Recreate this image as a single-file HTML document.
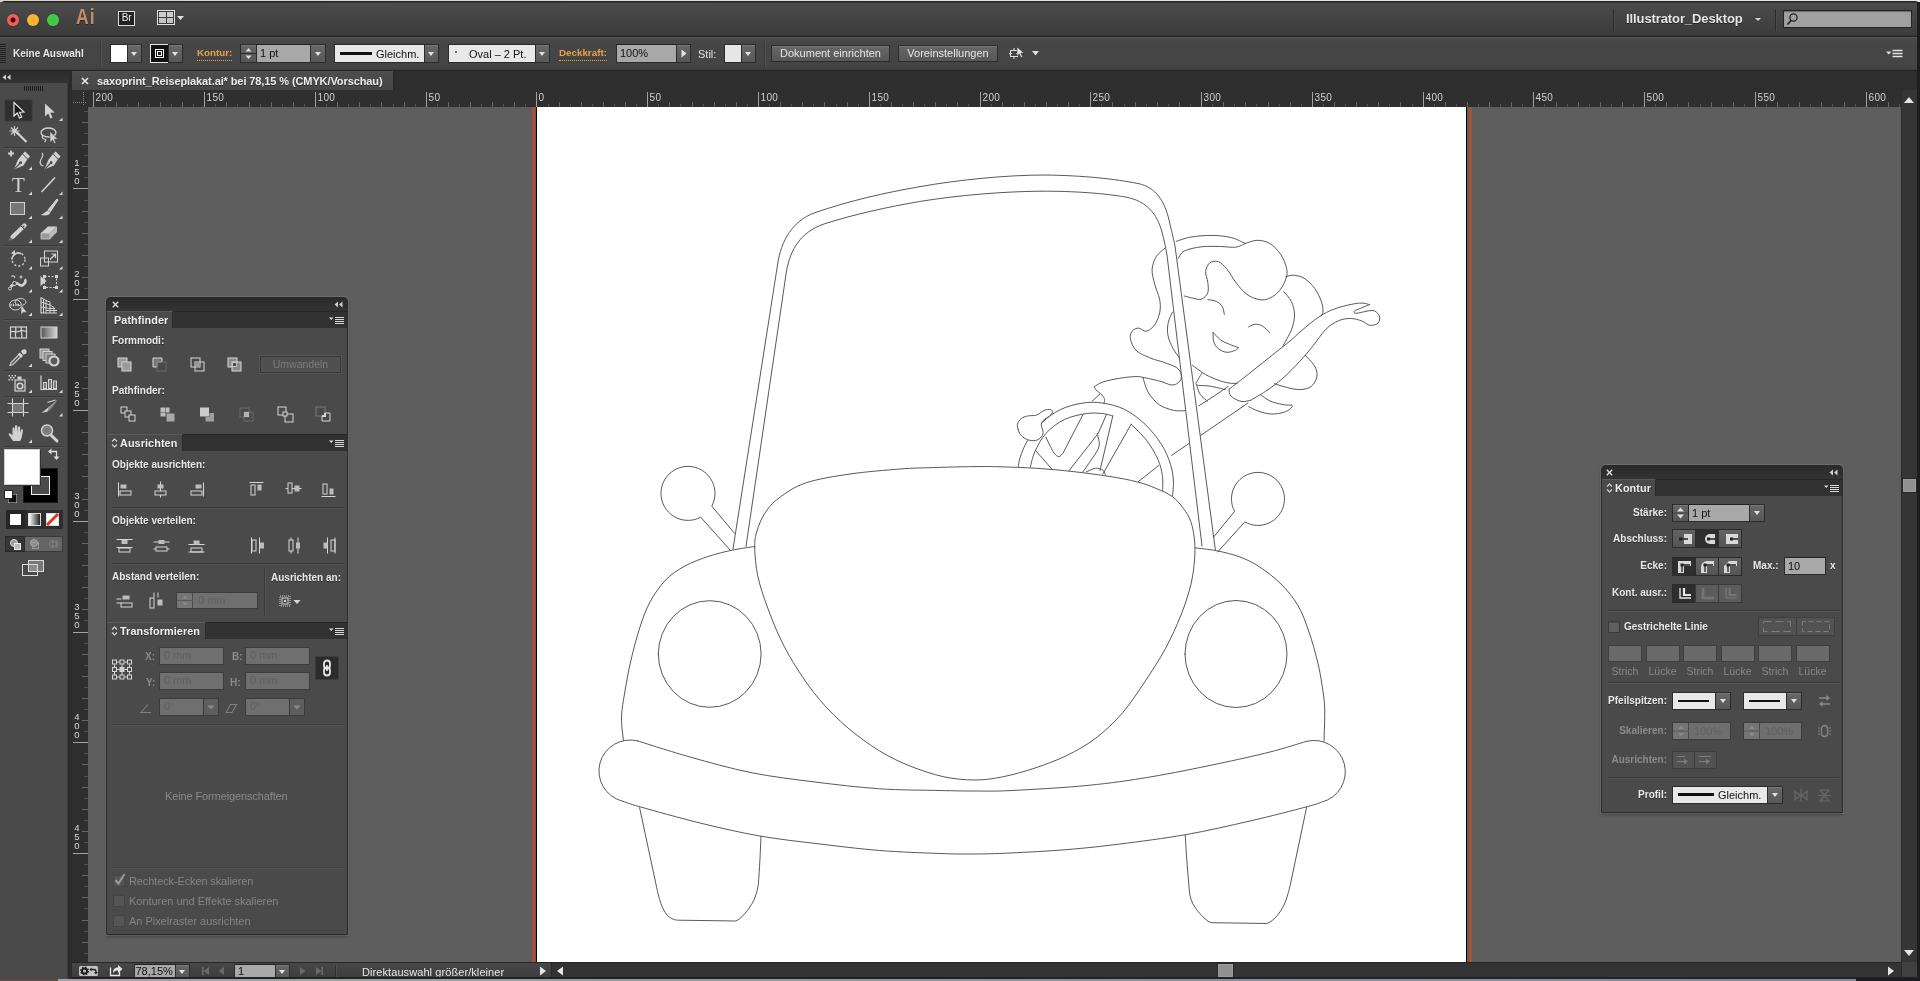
<!DOCTYPE html>
<html lang="de">
<head>
<meta charset="utf-8">
<title>saxoprint_Reiseplakat.ai* bei 78,15 % (CMYK/Vorschau)</title>
<style>
*{box-sizing:border-box;margin:0;padding:0}
html,body{width:1920px;height:981px;overflow:hidden;background:#5e5e5e}
body{position:relative;font-family:"Liberation Sans",sans-serif;font-size:11px;color:#e4e4e4;-webkit-font-smoothing:antialiased}
.a{position:absolute}
.t{position:absolute;white-space:nowrap;line-height:12px;height:12px}
.b{font-weight:bold}
.lbl{position:absolute;white-space:nowrap;line-height:12px;height:12px;font-weight:bold;font-size:10px;color:#e9e9e9;text-shadow:0 1px 0 rgba(0,0,0,.35)}
.dim{color:#8b8b8b;text-shadow:none}
.or{color:#eda049;font-weight:bold;font-size:9.8px}
.inp{position:absolute;background:#a8a8a8;border:1px solid #2b2b2b;border-top-color:#222;color:#111;font-size:11px;line-height:15px;padding-left:3px;white-space:nowrap;overflow:hidden}
.inpd{position:absolute;background:#6f6f6f;border:1px solid #3c3c3c;color:#606060;font-size:11px;line-height:15px;padding-left:4px;white-space:nowrap;overflow:hidden}
.btn{position:absolute;background:linear-gradient(#666,#575757);border:1px solid #2b2b2b;box-shadow:inset 0 1px 0 rgba(255,255,255,.12)}
.dd{position:absolute;background:linear-gradient(#686868,#585858);border:1px solid #2b2b2b;box-shadow:inset 0 1px 0 rgba(255,255,255,.12)}
.dd:after{content:"";position:absolute;left:50%;top:50%;margin:-2px 0 0 -3.5px;border:3.5px solid transparent;border-top:4.5px solid #e2e2e2;border-bottom:0}
.lt{position:absolute;background:#e8e8e8;border:1px solid #2b2b2b;color:#111}
.sep{position:absolute;background:#3a3a3a;box-shadow:0 1px 0 #555}
.vsep{position:absolute;background:#3a3a3a;box-shadow:1px 0 0 #555;width:1px}
svg{position:absolute;overflow:visible}
.ic{fill:none;stroke:#dcdcdc;stroke-width:1}
</style>
</head>
<body>
<div id="root" style="position:absolute;left:0;top:0;width:1920px;height:981px;will-change:transform">
<!-- ===== window top edge ===== -->
<div class="a" style="left:0;top:0;width:1920px;height:2px;background:linear-gradient(90deg,#d9cfc6,#e4e0e4 50%,#e8e6f0)"></div>
<div class="a" style="left:0;top:1px;width:1920px;height:36px;background:linear-gradient(#242424 0,#242424 1px,#4b4b4b 2px,#464646 12px,#3c3c3c 34px,#262626 35px);border-radius:5px 5px 0 0"></div>
<div class="a" style="left:1917px;top:2px;width:3px;height:979px;background:#1d1d1d"></div>
<!-- traffic lights -->
<div class="a" style="left:7px;top:14px;width:12px;height:12px;border-radius:50%;background:radial-gradient(circle,#3a0a08 0,#3a0a08 2px,#f25a52 3px,#f0665e 6px);box-shadow:0 0 1px #2a2a2a"></div>
<div class="a" style="left:27px;top:14px;width:12px;height:12px;border-radius:50%;background:radial-gradient(circle,#f3a92a 0,#f6bb33 6px);box-shadow:0 0 1px #2a2a2a"></div>
<div class="a" style="left:47px;top:14px;width:12px;height:12px;border-radius:50%;background:radial-gradient(circle,#3fc144 0,#44cf48 6px);box-shadow:0 0 1px #2a2a2a"></div>
<div class="t b" style="left:76px;top:5px;font-size:22px;line-height:24px;height:24px;color:#c48d69;letter-spacing:1.2px;transform:scaleX(.8);transform-origin:0 0;text-shadow:0 1px 0 #2a2a2a">Ai</div>
<!-- Br -->
<div class="a" style="left:118px;top:11px;width:17px;height:15px;border:1px solid #dcdcdc;background:#222;color:#ececec;font-size:10px;line-height:12px;text-align:center;letter-spacing:-.3px">Br</div>
<!-- arrange docs -->
<svg style="left:157px;top:10px" width="30" height="16"><rect x=".5" y=".5" width="17" height="14" fill="#3a3a3a" stroke="#e0e0e0"/><rect x="2" y="2" width="7" height="5" fill="#cdcdcd"/><rect x="2" y="8" width="7" height="5" fill="#c4c4c4"/><rect x="10" y="2" width="6" height="5" fill="#cdcdcd"/><rect x="10" y="8" width="6" height="5" fill="#c4c4c4"/><path d="M20 6h7l-3.5 4z" fill="#e0e0e0"/></svg>
<!-- right side of title bar -->
<div class="a" style="left:1613px;top:9px;width:1px;height:22px;background:#2a2a2a;box-shadow:1px 0 0 #4c4c4c"></div>
<div class="t b" style="left:1626px;top:12px;font-size:13px;line-height:14px;height:14px;color:#e6e6e6;letter-spacing:-.1px;text-shadow:0 1px 0 #222">Illustrator_Desktop</div>
<svg style="left:1754px;top:17px" width="8" height="5"><path d="M1 1h6l-3 3z" fill="#d8d8d8"/></svg>
<div class="a" style="left:1775px;top:9px;width:1px;height:22px;background:#2a2a2a;box-shadow:1px 0 0 #4c4c4c"></div>
<div class="a" style="left:1783px;top:10px;width:129px;height:18px;background:#a0a0a0;border:1px solid #242424;box-shadow:inset 0 1px 1px rgba(0,0,0,.35)"></div>
<svg style="left:1786px;top:12px" width="14" height="14"><circle cx="7.5" cy="5.5" r="3.6" fill="none" stroke="#222" stroke-width="1.3"/><path d="M5 8.5L1.5 12.5" stroke="#222" stroke-width="1.6"/></svg>

<!-- ===== control bar ===== -->
<div class="a" style="left:0;top:37px;width:1917px;height:33px;background:linear-gradient(#4b4b4b,#464646 4px,#444 30px,#3a3a3a);border-top:1px solid #555"></div>
<div class="a" style="left:0;top:70px;width:1917px;height:1px;background:#262626"></div>
<!-- grip -->
<div class="a" style="left:0;top:44px;width:6px;height:19px;background:repeating-linear-gradient(#1e1e1e 0,#1e1e1e 1px,#4a4a4a 1px,#4a4a4a 2px)"></div>
<div class="t b" style="left:13px;top:48px;font-size:10px;color:#e9e9e9;text-shadow:0 1px 0 #2a2a2a">Keine Auswahl</div>
<div class="a" style="left:100px;top:41px;width:1px;height:26px;background:#3a3a3a;box-shadow:1px 0 0 #515151"></div>
<!-- fill swatch -->
<div class="a" style="left:110px;top:44px;width:18px;height:19px;background:#fff;border:1px solid #2b2b2b"></div>
<div class="dd" style="left:127px;top:44px;width:15px;height:19px"></div>
<!-- stroke swatch -->
<div class="a" style="left:150px;top:44px;width:19px;height:19px;background:#111;border:1px solid #e8e8e8"></div>
<div class="a" style="left:155px;top:49px;width:9px;height:9px;background:#111;border:1px solid #f2f2f2"></div><div class="a" style="left:157px;top:51px;width:5px;height:5px;background:#222;border:1px solid #f2f2f2"></div>
<div class="dd" style="left:168px;top:44px;width:15px;height:19px"></div>
<div class="t or" style="left:197px;top:47px;border-bottom:1px dotted #eda049;height:14px">Kontur:</div>
<!-- stepper + input -->
<div class="btn" style="left:240px;top:44px;width:17px;height:19px"></div>
<svg style="left:240px;top:44px" width="17" height="19"><path d="M1 9.500h15" stroke="#2e2e2e"/><path d="M5.500 7.500h6L8.500 4zM5.500 11.500h6l-3 3.500z" fill="#dedede"/></svg>
<div class="inp" style="left:256px;top:44px;width:55px;height:19px;line-height:17px">1 pt</div>
<div class="dd" style="left:310px;top:44px;width:16px;height:19px"></div>
<!-- profile dropdown -->
<div class="lt" style="left:334px;top:44px;width:91px;height:19px"></div>
<div class="a" style="left:340px;top:52px;width:32px;height:3px;background:#111"></div>
<div class="t" style="left:376px;top:48px;color:#111">Gleichm.</div>
<div class="dd" style="left:424px;top:44px;width:15px;height:19px"></div>
<!-- brush dropdown -->
<div class="lt" style="left:448px;top:44px;width:88px;height:19px"></div>
<div class="a" style="left:455px;top:51px;width:2px;height:2px;background:#333;border-radius:1px"></div>
<div class="t" style="left:469px;top:48px;color:#111">Oval – 2 Pt.</div>
<div class="dd" style="left:535px;top:44px;width:15px;height:19px"></div>
<div class="t or" style="left:559px;top:47px;border-bottom:1px dotted #eda049;height:14px">Deckkraft:</div>
<div class="inp" style="left:616px;top:44px;width:61px;height:19px;line-height:17px">100%</div>
<div class="btn" style="left:676px;top:44px;width:15px;height:19px"></div>
<svg style="left:676px;top:44px" width="15" height="19"><path d="M5.5 5.5v8l5-4z" fill="#e4e4e4"/></svg>
<div class="t" style="left:698px;top:48px;color:#e2e2e2">Stil:</div>
<div class="a" style="left:724px;top:44px;width:18px;height:19px;background:#e6e6e6;border:1px solid #2b2b2b"></div>
<div class="dd" style="left:741px;top:44px;width:15px;height:19px"></div>
<div class="a" style="left:764px;top:41px;width:1px;height:26px;background:#3a3a3a;box-shadow:1px 0 0 #515151"></div>
<div class="btn" style="left:771px;top:45px;width:119px;height:17px;text-align:center;line-height:15px;color:#e6e6e6">Dokument einrichten</div>
<div class="btn" style="left:898px;top:45px;width:100px;height:17px;text-align:center;line-height:15px;color:#e6e6e6">Voreinstellungen</div>
<svg style="left:1009px;top:46px" width="32" height="16"><rect x="1.5" y="4.5" width="7" height="6" fill="none" stroke="#ddd"/><path d="M0 7.5h3M7 7.5h4M5 2v3M5 10v3" stroke="#ddd"/><path d="M8 1l7 6-3.2.2 1.8 3.6-1.6.8-1.8-3.7L8 10z" fill="#e6e6e6" stroke="#333" stroke-width=".5"/><path d="M23 5h7l-3.5 4.5z" fill="#e0e0e0"/></svg>
<!-- control-bar menu icon -->
<svg style="left:1886px;top:49px" width="17" height="9"><path d="M0 2.500h5.500L2.750 5.500z" fill="#e0e0e0"/><path d="M6.500 1.500h10M6.500 4.500h10M6.500 7.500h10" stroke="#e4e4e4" stroke-width="1.500"/></svg>

<!-- ===== tab bar ===== -->
<div class="a" style="left:72px;top:71px;width:1845px;height:19px;background:#2e2e2e"></div>
<div class="a" style="left:72px;top:71px;width:322px;height:19px;background:linear-gradient(#4d4d4d,#474747);border-right:1px solid #262626"></div>
<svg style="left:81px;top:77px" width="8" height="8"><path d="M1 1l6 6M7 1l-6 6" stroke="#e8e8e8" stroke-width="1.6"/></svg>
<div class="t b" style="left:97px;top:75px;font-size:11px;letter-spacing:-.1px;color:#ededed;text-shadow:0 1px 0 #2a2a2a">saxoprint_Reiseplakat.ai* bei 78,15 % (CMYK/Vorschau)</div>
<!-- ===== canvas ===== -->
<div class="a" style="left:88px;top:107px;width:1813px;height:855px;background:#5e5e5e"></div>
<div class="a" style="left:532px;top:107px;width:3px;height:855px;background:#a8502f"></div>
<div class="a" style="left:536px;top:107px;width:931px;height:855px;background:#fff;border-left:1px solid #000;border-right:1px solid #000"></div>
<div class="a" style="left:1469px;top:107px;width:3px;height:855px;background:#a8502f"></div>
<!-- horizontal ruler -->
<div class="a" style="left:72px;top:90px;width:1829px;height:17px;background:#2f2f2f"></div>
<svg style="left:0;top:90px" width="1901" height="17" shape-rendering="crispEdges"><path d="M93.5 2V17" stroke="#a2a2a2"/><path d="M105.5 14V17" stroke="#505050"/><path d="M116.5 12V17" stroke="#666"/><path d="M127.5 14V17" stroke="#505050"/><path d="M138.5 12V17" stroke="#666"/><path d="M149.5 14V17" stroke="#505050"/><path d="M160.5 12V17" stroke="#666"/><path d="M171.5 14V17" stroke="#505050"/><path d="M182.5 12V17" stroke="#666"/><path d="M193.5 14V17" stroke="#505050"/><path d="M204.5 2V17" stroke="#a2a2a2"/><path d="M215.5 14V17" stroke="#505050"/><path d="M226.5 12V17" stroke="#666"/><path d="M237.5 14V17" stroke="#505050"/><path d="M249.5 12V17" stroke="#666"/><path d="M260.5 14V17" stroke="#505050"/><path d="M271.5 12V17" stroke="#666"/><path d="M282.5 14V17" stroke="#505050"/><path d="M293.5 12V17" stroke="#666"/><path d="M304.5 14V17" stroke="#505050"/><path d="M315.5 2V17" stroke="#a2a2a2"/><path d="M326.5 14V17" stroke="#505050"/><path d="M337.5 12V17" stroke="#666"/><path d="M348.5 14V17" stroke="#505050"/><path d="M359.5 12V17" stroke="#666"/><path d="M370.5 14V17" stroke="#505050"/><path d="M381.5 12V17" stroke="#666"/><path d="M393.5 14V17" stroke="#505050"/><path d="M404.5 12V17" stroke="#666"/><path d="M415.5 14V17" stroke="#505050"/><path d="M426.5 2V17" stroke="#a2a2a2"/><path d="M437.5 14V17" stroke="#505050"/><path d="M448.5 12V17" stroke="#666"/><path d="M459.5 14V17" stroke="#505050"/><path d="M470.5 12V17" stroke="#666"/><path d="M481.5 14V17" stroke="#505050"/><path d="M492.5 12V17" stroke="#666"/><path d="M503.5 14V17" stroke="#505050"/><path d="M514.5 12V17" stroke="#666"/><path d="M525.5 14V17" stroke="#505050"/><path d="M536.5 2V17" stroke="#a2a2a2"/><path d="M548.5 14V17" stroke="#505050"/><path d="M559.5 12V17" stroke="#666"/><path d="M570.5 14V17" stroke="#505050"/><path d="M581.5 12V17" stroke="#666"/><path d="M592.5 14V17" stroke="#505050"/><path d="M603.5 12V17" stroke="#666"/><path d="M614.5 14V17" stroke="#505050"/><path d="M625.5 12V17" stroke="#666"/><path d="M636.5 14V17" stroke="#505050"/><path d="M647.5 2V17" stroke="#a2a2a2"/><path d="M658.5 14V17" stroke="#505050"/><path d="M669.5 12V17" stroke="#666"/><path d="M680.5 14V17" stroke="#505050"/><path d="M692.5 12V17" stroke="#666"/><path d="M703.5 14V17" stroke="#505050"/><path d="M714.5 12V17" stroke="#666"/><path d="M725.5 14V17" stroke="#505050"/><path d="M736.5 12V17" stroke="#666"/><path d="M747.5 14V17" stroke="#505050"/><path d="M758.5 2V17" stroke="#a2a2a2"/><path d="M769.5 14V17" stroke="#505050"/><path d="M780.5 12V17" stroke="#666"/><path d="M791.5 14V17" stroke="#505050"/><path d="M802.5 12V17" stroke="#666"/><path d="M813.5 14V17" stroke="#505050"/><path d="M824.5 12V17" stroke="#666"/><path d="M836.5 14V17" stroke="#505050"/><path d="M847.5 12V17" stroke="#666"/><path d="M858.5 14V17" stroke="#505050"/><path d="M869.5 2V17" stroke="#a2a2a2"/><path d="M880.5 14V17" stroke="#505050"/><path d="M891.5 12V17" stroke="#666"/><path d="M902.5 14V17" stroke="#505050"/><path d="M913.5 12V17" stroke="#666"/><path d="M924.5 14V17" stroke="#505050"/><path d="M935.5 12V17" stroke="#666"/><path d="M946.5 14V17" stroke="#505050"/><path d="M957.5 12V17" stroke="#666"/><path d="M968.5 14V17" stroke="#505050"/><path d="M980.5 2V17" stroke="#a2a2a2"/><path d="M991.5 14V17" stroke="#505050"/><path d="M1002.5 12V17" stroke="#666"/><path d="M1013.5 14V17" stroke="#505050"/><path d="M1024.5 12V17" stroke="#666"/><path d="M1035.5 14V17" stroke="#505050"/><path d="M1046.5 12V17" stroke="#666"/><path d="M1057.5 14V17" stroke="#505050"/><path d="M1068.5 12V17" stroke="#666"/><path d="M1079.5 14V17" stroke="#505050"/><path d="M1090.5 2V17" stroke="#a2a2a2"/><path d="M1101.5 14V17" stroke="#505050"/><path d="M1112.5 12V17" stroke="#666"/><path d="M1124.5 14V17" stroke="#505050"/><path d="M1135.5 12V17" stroke="#666"/><path d="M1146.5 14V17" stroke="#505050"/><path d="M1157.5 12V17" stroke="#666"/><path d="M1168.5 14V17" stroke="#505050"/><path d="M1179.5 12V17" stroke="#666"/><path d="M1190.5 14V17" stroke="#505050"/><path d="M1201.5 2V17" stroke="#a2a2a2"/><path d="M1212.5 14V17" stroke="#505050"/><path d="M1223.5 12V17" stroke="#666"/><path d="M1234.5 14V17" stroke="#505050"/><path d="M1245.5 12V17" stroke="#666"/><path d="M1256.5 14V17" stroke="#505050"/><path d="M1268.5 12V17" stroke="#666"/><path d="M1279.5 14V17" stroke="#505050"/><path d="M1290.5 12V17" stroke="#666"/><path d="M1301.5 14V17" stroke="#505050"/><path d="M1312.5 2V17" stroke="#a2a2a2"/><path d="M1323.5 14V17" stroke="#505050"/><path d="M1334.5 12V17" stroke="#666"/><path d="M1345.5 14V17" stroke="#505050"/><path d="M1356.5 12V17" stroke="#666"/><path d="M1367.5 14V17" stroke="#505050"/><path d="M1378.5 12V17" stroke="#666"/><path d="M1389.5 14V17" stroke="#505050"/><path d="M1400.5 12V17" stroke="#666"/><path d="M1412.5 14V17" stroke="#505050"/><path d="M1423.5 2V17" stroke="#a2a2a2"/><path d="M1434.5 14V17" stroke="#505050"/><path d="M1445.5 12V17" stroke="#666"/><path d="M1456.5 14V17" stroke="#505050"/><path d="M1467.5 12V17" stroke="#666"/><path d="M1478.5 14V17" stroke="#505050"/><path d="M1489.5 12V17" stroke="#666"/><path d="M1500.5 14V17" stroke="#505050"/><path d="M1511.5 12V17" stroke="#666"/><path d="M1522.5 14V17" stroke="#505050"/><path d="M1533.5 2V17" stroke="#a2a2a2"/><path d="M1544.5 14V17" stroke="#505050"/><path d="M1556.5 12V17" stroke="#666"/><path d="M1567.5 14V17" stroke="#505050"/><path d="M1578.5 12V17" stroke="#666"/><path d="M1589.5 14V17" stroke="#505050"/><path d="M1600.5 12V17" stroke="#666"/><path d="M1611.5 14V17" stroke="#505050"/><path d="M1622.5 12V17" stroke="#666"/><path d="M1633.5 14V17" stroke="#505050"/><path d="M1644.5 2V17" stroke="#a2a2a2"/><path d="M1655.5 14V17" stroke="#505050"/><path d="M1666.5 12V17" stroke="#666"/><path d="M1677.5 14V17" stroke="#505050"/><path d="M1688.5 12V17" stroke="#666"/><path d="M1700.5 14V17" stroke="#505050"/><path d="M1711.5 12V17" stroke="#666"/><path d="M1722.5 14V17" stroke="#505050"/><path d="M1733.5 12V17" stroke="#666"/><path d="M1744.5 14V17" stroke="#505050"/><path d="M1755.5 2V17" stroke="#a2a2a2"/><path d="M1766.5 14V17" stroke="#505050"/><path d="M1777.5 12V17" stroke="#666"/><path d="M1788.5 14V17" stroke="#505050"/><path d="M1799.5 12V17" stroke="#666"/><path d="M1810.5 14V17" stroke="#505050"/><path d="M1821.5 12V17" stroke="#666"/><path d="M1832.5 14V17" stroke="#505050"/><path d="M1844.5 12V17" stroke="#666"/><path d="M1855.5 14V17" stroke="#505050"/><path d="M1866.5 2V17" stroke="#a2a2a2"/><path d="M1877.5 14V17" stroke="#505050"/><path d="M1888.5 12V17" stroke="#666"/><path d="M1899.5 14V17" stroke="#505050"/></svg>
<div class="t" style="left:95.5px;top:93px;font-size:10px;line-height:10px;height:10px;color:#cfcfcf;letter-spacing:.35px">200</div>
<div class="t" style="left:206.5px;top:93px;font-size:10px;line-height:10px;height:10px;color:#cfcfcf;letter-spacing:.35px">150</div>
<div class="t" style="left:317.5px;top:93px;font-size:10px;line-height:10px;height:10px;color:#cfcfcf;letter-spacing:.35px">100</div>
<div class="t" style="left:428.5px;top:93px;font-size:10px;line-height:10px;height:10px;color:#cfcfcf;letter-spacing:.35px">50</div>
<div class="t" style="left:538.5px;top:93px;font-size:10px;line-height:10px;height:10px;color:#cfcfcf;letter-spacing:.35px">0</div>
<div class="t" style="left:649.5px;top:93px;font-size:10px;line-height:10px;height:10px;color:#cfcfcf;letter-spacing:.35px">50</div>
<div class="t" style="left:760.5px;top:93px;font-size:10px;line-height:10px;height:10px;color:#cfcfcf;letter-spacing:.35px">100</div>
<div class="t" style="left:871.5px;top:93px;font-size:10px;line-height:10px;height:10px;color:#cfcfcf;letter-spacing:.35px">150</div>
<div class="t" style="left:982.5px;top:93px;font-size:10px;line-height:10px;height:10px;color:#cfcfcf;letter-spacing:.35px">200</div>
<div class="t" style="left:1092.5px;top:93px;font-size:10px;line-height:10px;height:10px;color:#cfcfcf;letter-spacing:.35px">250</div>
<div class="t" style="left:1203.5px;top:93px;font-size:10px;line-height:10px;height:10px;color:#cfcfcf;letter-spacing:.35px">300</div>
<div class="t" style="left:1314.5px;top:93px;font-size:10px;line-height:10px;height:10px;color:#cfcfcf;letter-spacing:.35px">350</div>
<div class="t" style="left:1425.5px;top:93px;font-size:10px;line-height:10px;height:10px;color:#cfcfcf;letter-spacing:.35px">400</div>
<div class="t" style="left:1535.5px;top:93px;font-size:10px;line-height:10px;height:10px;color:#cfcfcf;letter-spacing:.35px">450</div>
<div class="t" style="left:1646.5px;top:93px;font-size:10px;line-height:10px;height:10px;color:#cfcfcf;letter-spacing:.35px">500</div>
<div class="t" style="left:1757.5px;top:93px;font-size:10px;line-height:10px;height:10px;color:#cfcfcf;letter-spacing:.35px">550</div>
<div class="t" style="left:1868.5px;top:93px;font-size:10px;line-height:10px;height:10px;color:#cfcfcf;letter-spacing:.35px">600</div>
<div class="a" style="left:72px;top:90px;width:16px;height:17px;background:#2f2f2f"></div>
<svg style="left:72px;top:90px" width="16" height="17" shape-rendering="crispEdges"><path d="M11.5 2v14M1 12.5h14" stroke="#888" stroke-dasharray="1 1"/></svg>
<!-- vertical ruler -->
<div class="a" style="left:72px;top:107px;width:16px;height:855px;background:#2f2f2f"></div>
<svg style="left:72px;top:0" width="16" height="962" shape-rendering="crispEdges"><path d="M12 111.5H16" stroke="#505050"/><path d="M10 122.5H16" stroke="#666"/><path d="M12 133.5H16" stroke="#505050"/><path d="M10 144.5H16" stroke="#666"/><path d="M12 155.5H16" stroke="#505050"/><path d="M10 166.5H16" stroke="#666"/><path d="M12 177.5H16" stroke="#505050"/><path d="M1 188.5H16" stroke="#a2a2a2"/><path d="M12 200.5H16" stroke="#505050"/><path d="M10 211.5H16" stroke="#666"/><path d="M12 222.5H16" stroke="#505050"/><path d="M10 233.5H16" stroke="#666"/><path d="M12 244.5H16" stroke="#505050"/><path d="M10 255.5H16" stroke="#666"/><path d="M12 266.5H16" stroke="#505050"/><path d="M10 277.5H16" stroke="#666"/><path d="M12 288.5H16" stroke="#505050"/><path d="M1 299.5H16" stroke="#a2a2a2"/><path d="M12 310.5H16" stroke="#505050"/><path d="M10 321.5H16" stroke="#666"/><path d="M12 332.5H16" stroke="#505050"/><path d="M10 344.5H16" stroke="#666"/><path d="M12 355.5H16" stroke="#505050"/><path d="M10 366.5H16" stroke="#666"/><path d="M12 377.5H16" stroke="#505050"/><path d="M10 388.5H16" stroke="#666"/><path d="M12 399.5H16" stroke="#505050"/><path d="M1 410.5H16" stroke="#a2a2a2"/><path d="M12 421.5H16" stroke="#505050"/><path d="M10 432.5H16" stroke="#666"/><path d="M12 443.5H16" stroke="#505050"/><path d="M10 454.5H16" stroke="#666"/><path d="M12 465.5H16" stroke="#505050"/><path d="M10 476.5H16" stroke="#666"/><path d="M12 488.5H16" stroke="#505050"/><path d="M10 499.5H16" stroke="#666"/><path d="M12 510.5H16" stroke="#505050"/><path d="M1 521.5H16" stroke="#a2a2a2"/><path d="M12 532.5H16" stroke="#505050"/><path d="M10 543.5H16" stroke="#666"/><path d="M12 554.5H16" stroke="#505050"/><path d="M10 565.5H16" stroke="#666"/><path d="M12 576.5H16" stroke="#505050"/><path d="M10 587.5H16" stroke="#666"/><path d="M12 598.5H16" stroke="#505050"/><path d="M10 609.5H16" stroke="#666"/><path d="M12 620.5H16" stroke="#505050"/><path d="M1 632.5H16" stroke="#a2a2a2"/><path d="M12 643.5H16" stroke="#505050"/><path d="M10 654.5H16" stroke="#666"/><path d="M12 665.5H16" stroke="#505050"/><path d="M10 676.5H16" stroke="#666"/><path d="M12 687.5H16" stroke="#505050"/><path d="M10 698.5H16" stroke="#666"/><path d="M12 709.5H16" stroke="#505050"/><path d="M10 720.5H16" stroke="#666"/><path d="M12 731.5H16" stroke="#505050"/><path d="M1 742.5H16" stroke="#a2a2a2"/><path d="M12 753.5H16" stroke="#505050"/><path d="M10 764.5H16" stroke="#666"/><path d="M12 776.5H16" stroke="#505050"/><path d="M10 787.5H16" stroke="#666"/><path d="M12 798.5H16" stroke="#505050"/><path d="M10 809.5H16" stroke="#666"/><path d="M12 820.5H16" stroke="#505050"/><path d="M10 831.5H16" stroke="#666"/><path d="M12 842.5H16" stroke="#505050"/><path d="M1 853.5H16" stroke="#a2a2a2"/><path d="M12 864.5H16" stroke="#505050"/><path d="M10 875.5H16" stroke="#666"/><path d="M12 886.5H16" stroke="#505050"/><path d="M10 897.5H16" stroke="#666"/><path d="M12 908.5H16" stroke="#505050"/><path d="M10 920.5H16" stroke="#666"/><path d="M12 931.5H16" stroke="#505050"/><path d="M10 942.5H16" stroke="#666"/><path d="M12 953.5H16" stroke="#505050"/></svg>
<div class="t" style="left:73.5px;top:158px;width:7px;font-size:9.5px;line-height:9px;height:28px;color:#d6d6d6;text-align:center;white-space:normal;word-break:break-all">1<br>5<br>0</div>
<div class="t" style="left:73.5px;top:269px;width:7px;font-size:9.5px;line-height:9px;height:28px;color:#d6d6d6;text-align:center;white-space:normal;word-break:break-all">2<br>0<br>0</div>
<div class="t" style="left:73.5px;top:380px;width:7px;font-size:9.5px;line-height:9px;height:28px;color:#d6d6d6;text-align:center;white-space:normal;word-break:break-all">2<br>5<br>0</div>
<div class="t" style="left:73.5px;top:491px;width:7px;font-size:9.5px;line-height:9px;height:28px;color:#d6d6d6;text-align:center;white-space:normal;word-break:break-all">3<br>0<br>0</div>
<div class="t" style="left:73.5px;top:602px;width:7px;font-size:9.5px;line-height:9px;height:28px;color:#d6d6d6;text-align:center;white-space:normal;word-break:break-all">3<br>5<br>0</div>
<div class="t" style="left:73.5px;top:712px;width:7px;font-size:9.5px;line-height:9px;height:28px;color:#d6d6d6;text-align:center;white-space:normal;word-break:break-all">4<br>0<br>0</div>
<div class="t" style="left:73.5px;top:823px;width:7px;font-size:9.5px;line-height:9px;height:28px;color:#d6d6d6;text-align:center;white-space:normal;word-break:break-all">4<br>5<br>0</div>
<!-- scrollbars -->
<div class="a" style="left:1901px;top:90px;width:16px;height:872px;background:#353535;border-left:1px solid #2a2a2a"></div>
<svg style="left:1903px;top:96px" width="12" height="8"><path d="M1 7h10l-5-6z" fill="#e3e3e3"/></svg>
<svg style="left:1903px;top:949px" width="12" height="8"><path d="M1 1h10l-5 6z" fill="#e3e3e3"/></svg>
<div class="a" style="left:1902px;top:478px;width:15px;height:15px;background:#909090;border:1px solid #262626;box-shadow:inset 0 0 0 1px #9d9d9d"></div>
<!-- status bar -->
<div class="a" style="left:72px;top:962px;width:1845px;height:17px;background:#333;border-top:1px solid #262626"></div>
<div class="a" style="left:72px;top:962px;width:480px;height:17px;background:linear-gradient(#474747,#3c3c3c);border-top:1px solid #262626"></div>
<div class="a" style="left:1901px;top:962px;width:16px;height:17px;background:#404040;border-left:1px solid #2a2a2a"></div>
<svg style="left:79px;top:966px" width="20" height="11"><rect x="0" y="0" width="19" height="10" rx="1.500" fill="#c4c4c4"/><circle cx="5.500" cy="5" r="2.500" fill="#c4c4c4" stroke="#1e1e1e" stroke-width="2"/><circle cx="5.500" cy="5" r="3.800" fill="none" stroke="#1e1e1e" stroke-width="1.400" stroke-dasharray="1.500 1.480"/><path d="M11.500 3.500h3.500a2 2 0 0 1 2 2v1" fill="none" stroke="#1e1e1e" stroke-width="1.400"/><path d="M12.500 1.500L10.500 3.500l2 2zM15 6h4l-2 2.500z" fill="#1e1e1e"/></svg>
<svg style="left:109px;top:964px" width="14" height="13"><path d="M1.5 3.5v8h9v-4" fill="none" stroke="#e6e6e6" stroke-width="1.3"/><path d="M4 9c0-4 2-5.5 5-5.5V1l4.5 4L9 9V6.5c-2 0-3.6.4-5 2.5z" fill="#e6e6e6"/></svg>
<div class="inp" style="left:134px;top:964px;width:42px;height:15px;line-height:13px;padding-left:.5px;background:#a9a9a9;font-size:11px">78,15%</div>
<div class="dd" style="left:175px;top:964px;width:15px;height:15px"></div>
<svg style="left:199px;top:965px" width="130" height="12"><g fill="#6a6a6a"><path d="M3 2h1.6v8H3zM10 2v8L4.6 6z"/><path d="M25 2v8l-5.4-4z"/></g><g fill="#6a6a6a"><path d="M101 2v8l5.400-4z"/><path d="M117 2v8l5.4-4zM122.400 2h1.600v8h-1.600z"/></g></svg>
<div class="inp" style="left:234px;top:964px;width:42px;height:15px;line-height:13px;padding-left:3px;background:#a9a9a9;font-size:11px">1</div>
<div class="dd" style="left:275px;top:964px;width:15px;height:15px"></div>
<div class="a" style="left:335px;top:965px;width:1px;height:12px;background:#2f2f2f;box-shadow:1px 0 0 #505050"></div>
<div class="t" style="left:362px;top:966px;font-size:11px;color:#e8e8e8;letter-spacing:.08px">Direktauswahl größer/kleiner</div>
<svg style="left:538px;top:965px" width="10" height="12"><path d="M2 1.500v9l6-4.500z" fill="#e6e6e6"/></svg>
<div class="a" style="left:551px;top:963px;width:1px;height:16px;background:#262626"></div>
<svg style="left:555px;top:965px" width="10" height="12"><path d="M8 1.500v9l-6-4.500z" fill="#e6e6e6"/></svg>
<svg style="left:1886px;top:965px" width="10" height="12"><path d="M2 1.500v9l6-4.500z" fill="#e6e6e6"/></svg>
<div class="a" style="left:1217px;top:963px;width:17px;height:15px;background:#909090;border:1px solid #262626;box-shadow:inset 0 0 0 1px #9d9d9d"></div>
<div class="a" style="left:0;top:977px;width:1920px;height:2px;background:#222"></div>
<div class="a" style="left:0;top:979px;width:1920px;height:2px;background:linear-gradient(90deg,#a6a2a6 0,#a0a0a8 15%,#8c8ea0 60%,#85879a 100%)"></div>
<div class="a" style="left:0;top:978px;width:58px;height:3px;background:linear-gradient(#4a3c34,#6a5548)"></div>
<div class="a" style="left:1856px;top:978px;width:64px;height:3px;background:#1c1c20"></div>
<!-- ===== artwork ===== -->
<svg style="left:0;top:0" width="1920" height="981" viewBox="0 0 1920 981"><g fill="none" stroke="#4f4f4f" stroke-width=".95" stroke-linejoin="round" stroke-linecap="round">
<path d="M1176.1 241.4C1178.5 240.7 1184.7 238.1 1190.6 237.1C1196.6 236.1 1205.3 235.3 1212.1 235.4C1218.8 235.5 1225.8 236.2 1231.3 237.6C1236.9 238.9 1242.9 242.6 1245.2 243.5"/>
<path d="M1245.2 243.5C1247.2 243.0 1252.9 240.3 1257.0 240.3C1261.1 240.3 1265.9 241.2 1269.9 243.5C1273.8 245.9 1277.8 250.2 1280.6 254.3C1283.3 258.4 1285.7 264.1 1286.6 268.2C1287.5 272.3 1287.1 275.1 1285.9 278.9C1284.7 282.6 1282.2 287.4 1279.5 290.6C1276.8 293.9 1273.3 296.6 1269.9 298.1C1266.5 299.6 1263.1 300.4 1259.2 299.6C1255.2 298.9 1250.2 296.8 1246.3 293.9C1242.4 290.9 1238.8 286.2 1235.6 282.1C1232.4 278.0 1229.9 272.6 1227.0 269.2C1224.2 265.9 1221.3 262.8 1218.5 261.7C1215.6 260.7 1212.1 261.2 1209.9 262.8C1207.8 264.4 1206.0 268.2 1205.6 271.4C1205.3 274.6 1207.4 278.5 1207.8 282.1C1208.1 285.7 1208.8 289.9 1207.8 292.8C1206.7 295.6 1203.9 298.3 1201.4 299.2C1198.9 300.1 1195.6 298.7 1192.8 298.1C1189.9 297.6 1185.7 296.4 1184.2 296.0"/>
<path d="M1178.2 258.5C1179.2 257.3 1180.4 253.0 1184.2 251.0C1188.1 249.1 1195.3 247.5 1201.4 246.8C1207.4 246.0 1214.9 246.5 1220.6 246.5C1226.3 246.6 1231.5 247.7 1235.6 247.2C1239.7 246.7 1243.6 244.2 1245.2 243.5"/>
<path d="M1285.9 276.7C1287.2 276.5 1290.4 275.0 1293.4 275.2C1296.4 275.5 1300.5 276.0 1304.1 278.2C1307.7 280.4 1311.9 284.5 1314.8 288.5C1317.7 292.5 1320.3 298.5 1321.7 302.4C1323.0 306.3 1323.0 309.8 1323.0 312.1C1322.9 314.3 1321.5 315.3 1321.2 315.9"/>
<path d="M1165.4 247.8C1163.9 249.3 1158.6 252.8 1156.4 256.4C1154.2 260.0 1152.4 264.6 1152.1 269.2C1151.8 273.9 1153.4 279.2 1154.7 284.2C1155.9 289.2 1158.7 294.6 1159.6 299.2C1160.5 303.9 1160.6 307.8 1159.8 312.1C1159.0 316.3 1157.0 321.7 1154.7 324.9C1152.4 328.1 1148.8 330.8 1146.1 331.3C1143.5 331.9 1141.1 328.2 1138.8 328.1C1136.6 328.0 1133.8 329.1 1132.4 330.9C1131.0 332.7 1129.6 335.5 1130.3 338.8C1131.0 342.2 1133.1 347.7 1136.7 351.0C1140.3 354.3 1149.5 357.4 1152.1 358.7"/>
<path d="M1172.5 312.1C1171.7 313.8 1168.9 318.8 1168.2 322.8C1167.4 326.7 1167.1 331.3 1168.0 335.6C1168.8 339.9 1171.2 344.7 1173.1 348.5C1175.0 352.2 1178.4 356.5 1179.5 358.1"/>
<path d="M1192.4 365.2C1194.6 366.7 1200.9 371.9 1205.6 374.6C1210.3 377.2 1216.3 379.5 1220.6 381.0C1224.9 382.5 1228.5 383.0 1231.3 383.3C1234.1 383.7 1236.3 383.2 1237.3 383.1"/>
<path d="M1283.8 291.7C1285.0 293.3 1289.5 297.6 1291.3 301.4C1293.1 305.1 1294.4 309.6 1294.5 314.2C1294.6 318.8 1293.7 323.8 1291.7 329.2C1289.7 334.5 1284.2 343.5 1282.7 346.3"/>
<path d="M1207.8 299.6C1209.2 299.9 1213.9 300.2 1216.3 301.4C1218.8 302.5 1221.0 304.6 1222.3 306.7C1223.7 308.8 1223.9 312.9 1224.3 314.2"/>
<path d="M1248.5 327.0C1249.5 326.6 1252.6 324.4 1254.9 324.3C1257.2 324.1 1259.9 324.5 1262.4 326.0C1264.9 327.4 1268.6 331.7 1269.9 332.8"/>
<path d="M1213.1 332.4C1213.2 334.0 1212.8 339.2 1213.8 342.0C1214.7 344.8 1216.7 347.4 1218.9 349.1C1221.1 350.8 1224.3 352.1 1227.0 352.3C1229.8 352.5 1233.7 350.9 1235.6 350.2C1237.5 349.4 1237.9 348.0 1238.4 347.6"/>
<path d="M1213.1 332.4C1214.4 333.6 1217.9 337.9 1220.6 339.9C1223.3 341.9 1226.2 342.9 1229.2 344.2C1232.1 345.5 1236.9 347.0 1238.4 347.6"/>
<path d="M1229.2 389.1C1232.4 386.6 1241.7 379.5 1248.5 374.1C1255.2 368.8 1262.7 362.7 1269.9 357.0C1277.0 351.3 1285.9 344.3 1291.3 339.9C1296.6 335.4 1297.3 334.1 1302.0 330.3C1306.6 326.4 1313.7 320.3 1319.1 316.8C1324.5 313.2 1328.7 311.1 1334.1 309.1C1339.4 307.0 1346.6 305.3 1351.2 304.4C1355.9 303.4 1358.9 303.0 1361.9 303.1C1365.0 303.1 1368.2 304.3 1369.4 304.6"/>
<path d="M1369.4 304.6C1368.0 305.2 1363.3 307.1 1360.8 308.2C1358.4 309.3 1355.2 310.1 1354.4 311.0C1353.6 311.8 1354.0 313.3 1355.9 313.3C1357.9 313.4 1364.5 311.6 1366.2 311.2"/>
<path d="M1366.2 311.2C1367.6 311.1 1372.1 309.9 1374.3 310.8C1376.5 311.6 1378.9 314.3 1379.5 316.3C1380.1 318.4 1379.5 321.7 1378.0 323.2C1376.4 324.7 1372.7 325.7 1370.1 325.3C1367.4 325.0 1365.1 322.2 1361.9 321.0C1358.8 319.9 1355.1 318.6 1351.2 318.5C1347.4 318.4 1343.0 318.8 1338.8 320.6C1334.6 322.4 1330.3 324.9 1326.0 329.2C1321.6 333.5 1317.0 341.0 1312.7 346.3C1308.3 351.7 1304.8 355.9 1299.8 361.3C1294.8 366.6 1288.4 373.4 1282.7 378.4C1277.0 383.4 1270.9 387.6 1265.6 391.3C1260.2 394.9 1253.1 398.8 1250.6 400.3"/>
<path d="M1229.2 389.1C1229.3 389.9 1228.9 392.3 1229.6 393.8C1230.3 395.3 1231.4 396.8 1233.5 398.1C1235.5 399.4 1239.2 401.2 1242.0 401.5C1244.9 401.9 1249.2 400.5 1250.6 400.3"/>
<path d="M1228.1 386.6L1214.2 396.0L1198.8 405.8"/>
<path d="M1305.2 355.3C1306.7 357.0 1312.4 362.1 1314.4 365.6C1316.4 369.1 1317.5 372.8 1317.0 376.3C1316.4 379.8 1314.0 384.3 1311.0 386.6C1307.9 388.8 1303.3 389.6 1298.8 389.6C1294.2 389.6 1287.8 387.6 1283.8 386.6C1279.7 385.6 1276.1 384.1 1274.6 383.6"/>
<path d="M1260.2 394.5C1261.8 395.6 1266.2 399.2 1269.9 400.9C1273.5 402.6 1278.5 403.7 1282.3 404.5C1286.0 405.4 1291.8 404.6 1292.3 405.8C1292.8 407.0 1288.8 410.5 1285.3 411.8C1281.7 413.2 1275.5 414.1 1270.9 414.0C1266.4 413.8 1261.8 412.2 1258.1 411.0C1254.4 409.8 1250.4 407.4 1248.9 406.7"/>
<path d="M1202.4 372.4C1201.7 373.6 1199.1 377.4 1198.1 379.5C1197.2 381.6 1194.7 383.7 1196.6 384.8C1198.6 386.0 1205.1 385.3 1209.9 386.1C1214.7 386.9 1222.8 389.0 1225.3 389.6"/>
<path d="M1196.6 384.8C1197.2 386.5 1198.5 391.8 1200.3 394.5C1202.1 397.2 1206.2 400.0 1207.3 401.1"/>
<path d="M1018.3 466.8C1018.7 465.2 1018.7 461.6 1020.2 457.2C1021.7 452.9 1023.9 446.5 1027.5 440.7C1031.2 434.9 1036.7 427.6 1042.2 422.4C1047.7 417.2 1053.8 412.8 1060.6 409.5C1067.3 406.3 1075.5 404.2 1082.6 403.1C1089.6 402.0 1095.7 402.0 1102.8 403.1C1109.8 404.2 1117.7 406.0 1124.8 409.5C1131.8 413.1 1138.8 418.4 1145.0 424.2C1151.1 430.0 1157.2 437.7 1161.5 444.4C1165.7 451.1 1168.7 458.5 1170.6 464.6C1172.6 470.7 1173.1 475.7 1173.4 481.1C1173.7 486.5 1172.6 494.1 1172.5 496.7"/>
<path d="M1030.3 467.3C1031.0 464.7 1032.3 457.4 1034.9 451.7C1037.5 446.1 1041.0 438.7 1045.9 433.4C1050.8 428.0 1057.5 422.9 1064.2 419.6C1070.9 416.3 1079.8 414.6 1086.2 413.6C1092.7 412.6 1098.3 413.2 1102.8 413.6C1107.2 414.0 1111.2 415.6 1112.8 416.0"/>
<path d="M1131.2 424.2C1133.8 427.0 1142.4 434.9 1146.8 440.7C1151.2 446.5 1155.2 453.3 1157.8 459.1C1160.4 464.9 1161.6 470.3 1162.4 475.6C1163.2 480.9 1162.5 488.1 1162.6 490.6"/>
<path d="M1045.9 437.1C1047.1 439.5 1051.1 448.5 1053.2 451.7C1055.4 455.0 1057.0 456.5 1058.7 456.7C1060.4 456.9 1062.5 453.3 1063.3 452.7"/>
<path d="M1063.3 452.7L1082.9 414.7"/>
<path d="M1035.8 450.8L1052.3 469.5"/>
<path d="M1068.8 471.0L1098.2 433.4L1106.4 414.7"/>
<path d="M1097.2 433.4C1097.6 435.5 1100.0 442.0 1099.1 446.2C1098.2 450.5 1094.5 454.7 1091.7 459.1C1089.0 463.4 1084.1 470.1 1082.6 472.3"/>
<path d="M1112.8 416.0L1100.0 470.5"/>
<path d="M1131.2 424.2L1102.8 474.1"/>
<path d="M1086.2 471.9C1087.8 471.3 1092.7 468.6 1095.4 468.3C1098.2 468.0 1101.1 469.0 1102.8 470.1C1104.4 471.2 1105.0 474.2 1105.5 475.0"/>
<path d="M1248.0 403.0L1171.6 455.4"/>
<path d="M1158.7 465.5L1138.5 481.5"/>
<path d="M1018.3 429.7C1017.9 428.0 1017.0 426.1 1017.4 424.2C1017.9 422.4 1019.4 420.1 1021.1 418.7C1022.8 417.3 1024.9 416.6 1027.5 416.0C1030.1 415.4 1033.9 416.0 1036.7 415.0C1039.4 414.1 1041.7 411.4 1044.0 410.5C1046.3 409.5 1049.1 409.2 1050.5 409.5C1051.8 409.8 1052.4 411.2 1052.3 412.3C1052.1 413.4 1051.1 414.6 1049.5 416.0C1048.0 417.3 1044.5 419.0 1043.1 420.6C1041.7 422.1 1041.3 423.1 1041.3 425.1C1041.3 427.1 1043.3 430.3 1043.1 432.5C1043.0 434.6 1041.9 436.6 1040.4 438.0C1038.8 439.4 1036.4 440.6 1033.9 440.7C1031.5 440.9 1028.0 440.0 1025.7 438.9C1023.4 437.8 1021.4 435.8 1020.2 434.3C1019.0 432.8 1018.8 431.4 1018.3 429.7Z" fill="#fff"/>
<path d="M1094.5 386.6C1095.9 385.8 1098.6 383.4 1102.8 382.0C1106.9 380.6 1113.8 379.3 1119.3 378.3C1124.8 377.4 1131.8 376.7 1135.8 376.5C1139.8 376.4 1141.9 377.3 1143.1 377.4"/>
<path d="M1094.5 386.6C1094.7 387.1 1094.6 388.3 1095.8 389.7C1097.0 391.1 1100.4 393.2 1101.8 394.9C1103.3 396.5 1104.3 398.0 1104.6 399.4C1104.9 400.9 1104.0 402.7 1103.9 403.3"/>
<path d="M1100.0 393.9L1092.3 401.1"/>
<path d="M1143.1 377.4C1145.9 378.0 1155.0 379.9 1159.6 381.1C1164.2 382.3 1167.8 384.3 1170.6 384.8C1173.5 385.2 1174.8 384.8 1176.5 383.9C1178.2 382.9 1180.2 381.1 1180.9 379.3C1181.6 377.4 1181.5 374.8 1180.7 372.8C1179.9 370.9 1178.7 369.0 1176.1 367.3C1173.5 365.7 1168.5 364.0 1165.1 362.8C1161.8 361.5 1158.1 360.7 1156.0 360.0C1153.8 359.3 1152.8 358.9 1152.1 358.7"/>
<path d="M1143.1 378.3C1144.0 380.8 1145.9 388.6 1148.6 393.0C1151.4 397.5 1155.4 402.0 1159.6 405.0C1163.9 407.9 1170.1 409.5 1174.3 410.5C1178.5 411.4 1183.2 410.6 1185.0 410.6"/>
<path d="M733 549L777.5 265C781 240 793 221 814 213C850 200.5 885 192.8 919 186.8C960 179.6 1005 175.2 1044 175C1085 175.5 1115 179 1138 183.5C1156 187 1165 202 1169 220C1171.5 231 1173 236 1175 246L1215.4 550ZM746 546.5L786.2 273C790 248 802 232 823 224.3C855 214 888 207 919.5 201.5C960 195 1003 191.6 1040 191.2C1075 191 1105 193.5 1125.5 197C1147 201 1157 214 1162 232C1164 240 1165.5 246 1167 255L1202 546Z" fill="#fff" fill-rule="evenodd" stroke="none"/>
<path d="M733 549L777.5 265C781 240 793 221 814 213C850 200.5 885 192.8 919 186.8C960 179.6 1005 175.2 1044 175C1085 175.5 1115 179 1138 183.5C1156 187 1165 202 1169 220C1171.5 231 1173 236 1175 246L1215.4 550"/>
<path d="M746 546.5L786.2 273C790 248 802 232 823 224.3C855 214 888 207 919.5 201.5C960 195 1003 191.6 1040 191.2C1075 191 1105 193.5 1125.5 197C1147 201 1157 214 1162 232C1164 240 1165.5 246 1167 255L1202 546"/>
<path d="M734.5 533.3L711.8 506.1A27 27 0 1 0 700.7 517.2L730.5 550.5"/>
<path d="M1213.3 537.4L1234.6 511.4A26.5 26.5 0 1 1 1244.8 521.9L1217.6 552"/>
<path d="M754.7 546.5C751.1 547.1 740.7 548.4 733.0 550.0C725.3 551.6 716.4 553.7 708.4 556.4C700.4 559.1 692.1 562.1 685.0 566.0C677.9 569.9 671.4 574.0 665.6 580.0C659.8 586.0 654.3 594.2 650.0 602.0C645.7 609.8 643.2 617.3 640.0 627.0C636.8 636.7 633.5 649.3 631.0 660.0C628.5 670.7 626.6 681.5 625.0 691.0C623.4 700.5 621.8 708.7 621.5 717.0C621.2 725.3 623.2 737.0 623.5 741.0"/>
<path d="M1194.6 547.8C1198.3 548.3 1209.2 549.3 1216.8 550.8C1224.4 552.3 1232.8 554.3 1240.0 557.0C1247.2 559.7 1252.9 562.5 1259.7 567.0C1266.5 571.5 1274.6 577.6 1281.0 584.0C1287.4 590.4 1293.3 597.6 1298.0 605.6C1302.7 613.6 1305.8 622.8 1309.0 632.0C1312.2 641.2 1315.2 652.2 1317.4 661.0C1319.6 669.8 1320.8 677.2 1322.0 685.0C1323.2 692.8 1324.4 698.7 1324.7 708.0C1325.0 717.3 1324.1 735.5 1324.0 741.0"/>
<path d="M754.7 547.0C754.6 539.5 755.3 536.7 757.0 531.0C758.7 525.3 761.3 518.5 765.0 513.0C768.7 507.5 772.2 503.0 779.0 498.0C785.8 493.0 793.7 487.0 805.5 483.0C817.3 479.0 834.2 476.3 850.0 474.0C865.8 471.7 886.2 470.1 900.0 469.0C913.8 467.9 920.1 468.0 932.6 467.6C945.1 467.2 963.8 466.7 975.0 466.6C986.2 466.5 989.7 466.5 1000.0 466.8C1010.3 467.1 1024.5 467.5 1036.7 468.3C1048.9 469.1 1061.2 470.2 1073.4 471.6C1085.6 473.0 1099.3 474.8 1110.0 476.5C1120.7 478.2 1129.9 480.0 1137.6 482.0C1145.3 484.0 1150.2 485.9 1156.0 488.4C1161.8 490.8 1167.9 493.3 1172.5 496.7C1177.1 500.1 1180.5 504.5 1183.5 508.6C1186.5 512.7 1189.0 516.3 1190.8 521.5C1192.6 526.7 1193.9 533.6 1194.5 540.0C1195.1 546.4 1195.1 552.7 1194.5 560.0C1193.9 567.3 1193.2 574.8 1191.0 584.0C1188.8 593.2 1185.2 604.3 1181.0 615.0C1176.8 625.7 1171.3 637.6 1165.5 648.4C1159.7 659.2 1153.1 669.3 1146.0 680.0C1138.9 690.7 1131.0 702.9 1122.7 712.6C1114.4 722.3 1105.3 730.9 1096.0 738.0C1086.7 745.1 1077.2 750.4 1067.0 755.4C1056.8 760.4 1045.7 764.4 1035.0 768.0C1024.3 771.6 1012.8 774.8 1002.8 776.8C992.8 778.8 984.8 780.0 975.0 780.0C965.2 780.0 954.7 779.1 943.9 776.8C933.1 774.5 920.7 770.3 910.0 766.0C899.3 761.7 890.0 757.3 879.7 751.0C869.4 744.7 858.0 736.5 848.0 728.0C838.0 719.5 828.0 709.5 819.7 699.8C811.4 690.1 804.5 680.0 798.0 670.0C791.5 660.0 786.2 650.7 781.0 640.0C775.8 629.3 770.9 616.7 767.0 606.0C763.1 595.3 759.8 585.5 757.7 575.7C755.7 565.9 754.8 554.5 754.7 547.0Z" fill="#fff"/>
<path d="M639.6 807.7L656.7 887.6C659 899 662 909 667.3 915.3C671 919 675 920.2 678.7 920.2L735.8 921C741 919 748 911 753.7 900.7C756.5 894 757.8 889 758.3 884.4C759.5 870 760.5 850 761 835.4"/>
<path d="M1185.3 835.4C1185.8 845 1186.3 853 1186.9 861.5L1189.3 890.9C1190 898 1192 903 1195 907.2C1198 912 1201 915 1204 917.8C1207 921 1209.5 922.5 1212.2 922.7L1266.8 923.5C1271 922 1274 919.5 1277.4 915.3C1281 911 1284 906 1286.4 899C1288 894 1289.5 889 1290.4 884.4L1306.7 806.9"/>
<path d="M638.0 741.0C646.7 743.7 671.2 751.7 690.0 757.0C708.8 762.3 730.2 768.4 751.0 772.6C771.8 776.8 793.5 779.3 815.0 782.0C836.5 784.7 858.9 787.4 879.7 788.8C900.5 790.2 924.1 790.1 940.0 790.5C955.9 790.9 963.3 791.0 975.0 791.0C986.7 791.0 991.2 791.5 1010.0 790.6C1028.8 789.7 1064.7 787.7 1088.0 785.4C1111.3 783.1 1128.5 780.6 1150.0 777.0C1171.5 773.4 1196.8 768.2 1216.8 764.0C1236.8 759.8 1255.1 755.8 1270.0 752.0C1284.9 748.2 1300.0 743.2 1306.0 741.5A31 31 0 0 1 1322 802C1319.5 802.8 1318.7 803.6 1306.7 806.8C1294.7 810.0 1270.1 816.4 1250.0 821.0C1229.9 825.6 1207.7 830.8 1186.0 834.6C1164.3 838.4 1139.8 841.5 1120.0 844.0C1100.2 846.5 1085.3 848.1 1067.0 849.6C1048.7 851.1 1025.3 852.3 1010.0 853.0C994.7 853.7 986.7 853.9 975.0 854.0C963.3 854.1 955.9 854.1 940.0 853.5C924.1 852.9 899.7 852.1 879.7 850.5C859.7 848.9 840.0 846.4 820.0 844.0C800.0 841.6 779.8 839.5 759.8 836.0C739.8 832.5 720.0 827.9 700.0 823.0C680.0 818.1 653.0 810.5 640.0 806.8C627.0 803.1 625.0 802.0 622.0 801.0A31 31 0 0 1 638 741Z" fill="#fff"/>
<path d="M658.3 654a51.4 53.3 0 1 0 102.8 0a51.4 53.3 0 1 0 -102.8 0Z"/>
<path d="M1185 654a51 53.5 0 1 0 102 0a51 53.5 0 1 0 -102 0Z"/>
</g></svg>
<!-- ===== tools panel ===== -->
<div class="a" style="left:0;top:71px;width:72px;height:908px;background:#2a2a2a"></div>
<div class="a" style="left:0;top:71px;width:68px;height:908px;background:#4a4a4a;border-right:1px solid #3c3c3c"></div>
<div class="a" style="left:0;top:71px;width:69px;height:12px;background:linear-gradient(#2b2b2b,#343434)"></div>
<svg style="left:2px;top:74px" width="10" height="8"><path d="M4 .5v5.500L.5 3.250zM8.500 .5v5.500L5 3.250z" fill="#d4d4d4"/></svg>
<div class="a" style="left:24px;top:86px;width:20px;height:5px;background:repeating-linear-gradient(90deg,#1f1f1f 0,#1f1f1f 1px,#4a4a4a 1px,#4a4a4a 2px)"></div>
<div class="a" style="left:4px;top:147px;width:60px;height:1px;background:#3a3a3a;box-shadow:0 1px 0 #545454"></div>
<div class="a" style="left:4px;top:245px;width:60px;height:1px;background:#3a3a3a;box-shadow:0 1px 0 #545454"></div>
<div class="a" style="left:4px;top:319px;width:60px;height:1px;background:#3a3a3a;box-shadow:0 1px 0 #545454"></div>
<div class="a" style="left:4px;top:370px;width:60px;height:1px;background:#3a3a3a;box-shadow:0 1px 0 #545454"></div>
<div class="a" style="left:4px;top:396px;width:60px;height:1px;background:#3a3a3a;box-shadow:0 1px 0 #545454"></div>
<div class="a" style="left:4px;top:446px;width:60px;height:1px;background:#3a3a3a;box-shadow:0 1px 0 #545454"></div>
<svg style="left:0;top:0" width="72" height="460"><g transform="translate(18.5,111)"><rect x="-13.500" y="-11" width="27" height="21" fill="#2f2f2f" stroke="#3a3a3a"/><path d="M-4.500-8.500v13.500l3.300-3 2.200 5 2.200-1-2.200-4.800 4.500-.2z" fill="#1a1a1a" stroke="#f2f2f2" stroke-width="1.100" stroke-linejoin="miter"/></g><g transform="translate(49,111)"><path d="M-4-7.500v13l3.200-3 2.300 5 2-1-2.200-4.800 4.400-.2z" fill="#d2d2d2"/><path d="M13.500 6.500v3.500H10z" fill="#d8d8d8"/></g><g transform="translate(18.5,135)"><path d="M-2-3L8 7" stroke="#d2d2d2" stroke-width="2.200"/><path d="M-4-9v10M-9-4h10M-7.500-7.500l7 7M-.5-7.500l-7 7" stroke="#d2d2d2" stroke-width="1.100"/><circle cx="-4" cy="-4" r="2.200" fill="#d2d2d2"/></g><g transform="translate(49,135)"><ellipse cx="-.5" cy="-2.500" rx="7.500" ry="4.500" fill="none" stroke="#d2d2d2" stroke-width="1.300"/><path d="M-6 0c-1.500 2-.5 4 1.500 4s1.500 2 0 3" fill="none" stroke="#d2d2d2" stroke-width="1.200"/><path d="M1-3.500v11l2.600-2.400 1.700 3.500 1.600-.8-1.700-3.500 3.500-.2z" fill="#d2d2d2" stroke="#4a4a4a" stroke-width=".6"/></g><g transform="translate(18.5,160)"><g transform="translate(1,1) scale(1.12)"><path d="M5-8.500l4.500 4.500-2 2-4.500-4.500z" fill="#d2d2d2"/><path d="M2.500-6l4.500 4.500-3.500 5.500-8.500 3.500 3.500-8.500z" fill="#d2d2d2"/><path d="M-4.500 7l5-5" stroke="#4a4a4a" stroke-width="1"/><circle cx="1" cy="1.500" r="1.300" fill="#4a4a4a"/></g><path d="M-10.500-6.500h6M-7.500-9.500v6" stroke="#d2d2d2" stroke-width="1.800"/><path d="M13.500 6.500v3.500H10z" fill="#d8d8d8"/></g><g transform="translate(49,160)"><g transform="translate(1,1) scale(1.12)"><path d="M5-8.500l4.500 4.500-2 2-4.500-4.500z" fill="#d2d2d2"/><path d="M2.500-6l4.500 4.500-3.500 5.500-8.500 3.500 3.500-8.500z" fill="#d2d2d2"/><path d="M-4.500 7l5-5" stroke="#4a4a4a" stroke-width="1"/><circle cx="1" cy="1.500" r="1.300" fill="#4a4a4a"/></g><path d="M-7-7c2 1.500 .5 4-1 6.500s-1 6 2.500 6.500" fill="none" stroke="#d2d2d2" stroke-width="1.200"/></g><g transform="translate(18.5,185)"><text x="0" y="7" text-anchor="middle" font-family="Liberation Serif,serif" font-size="21" fill="#d2d2d2">T</text><path d="M13.500 6.500v3.500H10z" fill="#d8d8d8"/></g><g transform="translate(49,185)"><path d="M-7.500 7L6-7.500" stroke="#d2d2d2" stroke-width="1.600"/><path d="M13.500 6.500v3.500H10z" fill="#d8d8d8"/></g><g transform="translate(18.5,209)"><rect x="-8" y="-6.500" width="14" height="12" fill="#777" stroke="#d2d2d2" stroke-width="1"/><path d="M13.500 6.500v3.500H10z" fill="#d8d8d8"/></g><g transform="translate(49,209)"><path d="M9-9L1.500 2.500l-2.500-1.500L8-10z" fill="#d2d2d2" stroke="#d2d2d2" stroke-width="1"/><path d="M-1.500 1.500l3 2c-1 3-5 3.500-10 2.500 2.500-.5 4-2.500 7-4.500z" fill="#d2d2d2"/><path d="M13.500 6.500v3.500H10z" fill="#d8d8d8"/></g><g transform="translate(18.5,233)"><path d="M4.500-9a2 2 0 0 1 3 3L-4.500 5.500l-5 2 2-5z" fill="#d2d2d2"/><path d="M2.500-7l3 3" stroke="#4a4a4a" stroke-width="1"/><circle cx="5" cy="-6.500" r="1" fill="#4a4a4a"/><path d="M-9.500 7.500l1.500-3.500 2 2z" fill="#666"/><path d="M13.500 6.500v3.500H10z" fill="#d8d8d8"/></g><g transform="translate(49,233)"><path d="M-8 0L-1-6.500h9L1 0z" fill="#d2d2d2"/><path d="M-8 0h9v6h-9z" fill="#9a9a9a" stroke="#d2d2d2" stroke-width=".8"/><path d="M1 0L8-6.500v5.500L1 6z" fill="#bdbdbd"/><path d="M13.500 6.500v3.500H10z" fill="#d8d8d8"/></g><g transform="translate(18.5,259.5)"><circle cx="0" cy="0" r="6.500" fill="none" stroke="#d2d2d2" stroke-width="1.400" stroke-dasharray="2 2.100"/><path d="M-6.500 0a6.500 6.500 0 0 1 9-6" fill="none" stroke="#d2d2d2" stroke-width="1.500"/><path d="M-4-9.500l-3.500 3.500 4.500 1z" fill="#d2d2d2"/><path d="M13.500 6.500v3.500H10z" fill="#d8d8d8"/></g><g transform="translate(49,259.5)"><rect x="-8.500" y="-1.500" width="8" height="8" fill="none" stroke="#d2d2d2"/><rect x="-4.500" y="-8.500" width="13" height="11" fill="none" stroke="#d2d2d2"/><path d="M1 0l5-5M2.500-5.500h4v4" fill="none" stroke="#d2d2d2" stroke-width="1.200"/><path d="M13.500 6.500v3.500H10z" fill="#d8d8d8"/></g><g transform="translate(18.5,282.5)"><path d="M-8 4c3-1 4-5 7-3s4 3 6 1 3-4 1-5" fill="none" stroke="#d2d2d2" stroke-width="2.600"/><circle cx="-4" cy="1" r="2" fill="#4a4a4a" stroke="#d2d2d2"/><circle cx="-8.500" cy="6" r="1.500" fill="#4a4a4a" stroke="#d2d2d2"/><path d="M-7-6c1.500-1.500 3-.5 3.500 1.500M1-5.500h3M2.500-7v3" fill="none" stroke="#d2d2d2" stroke-width="1.200"/><path d="M13.500 6.500v3.500H10z" fill="#d8d8d8"/></g><g transform="translate(49,282.5)"><rect x="-4.500" y="-6" width="12" height="11" fill="none" stroke="#d2d2d2" stroke-dasharray="2 1.500"/><g fill="#d2d2d2"><rect x="-6" y="-7.500" width="3" height="3"/><rect x="6" y="-7.500" width="3" height="3"/><rect x="-6" y="3.500" width="3" height="3"/><rect x="6" y="3.500" width="3" height="3"/></g><path d="M-8.500-6.500v10l6-5z" fill="#d2d2d2"/><path d="M13.500 6.500v3.500H10z" fill="#d8d8d8"/></g><g transform="translate(18.5,306)"><ellipse cx="-3" cy="-1" rx="6" ry="5" fill="none" stroke="#d2d2d2"/><ellipse cx="2" cy="-4" rx="5.500" ry="3.500" fill="none" stroke="#d2d2d2"/><path d="M-8-1h10" stroke="#d2d2d2" stroke-dasharray="1.200 1.200" stroke-width="2.400"/><path d="M2.500-1.500v10l2.400-2.200 3.600 .2z" fill="#d2d2d2" stroke="#4a4a4a" stroke-width=".5"/><path d="M13.500 6.500v3.500H10z" fill="#d8d8d8"/></g><g transform="translate(49,306)"><path d="M-8-8.500v15.500h16" fill="none" stroke="#d2d2d2" stroke-width="1.200"/><path d="M-8-8.500l5 3v12.500M-5.500-7v14M-3-5.500l4 1.500v11M-8-4l9 3M-8 1l9 1.500M-3 4.500h11M1-1l4 2.500v5.500M1 2.500h5" fill="none" stroke="#d2d2d2" stroke-width="1"/><path d="M13.500 6.500v3.500H10z" fill="#d8d8d8"/></g><g transform="translate(18.5,333)"><rect x="-8" y="-6" width="16" height="11" fill="none" stroke="#d2d2d2" stroke-width="1.200"/><path d="M-8-1c3-2 5 1 8-.5s5-1 8 0M-3-6c1.500 3-1.500 7 .5 11M3-6c-1.500 4 1.500 7 0 11" fill="none" stroke="#d2d2d2" stroke-width="1.300"/></g><g transform="translate(49,333)"><defs><linearGradient id="gr1"><stop offset="0" stop-color="#555"/><stop offset="1" stop-color="#d8d8d8"/></linearGradient></defs><rect x="-8" y="-6" width="16" height="11" fill="url(#gr1)" stroke="#d2d2d2" stroke-width="1"/></g><g transform="translate(18.5,357)"><path d="M-8.500 8.500l1-3L1.500-3.500l2 2L-5.500 7.500z" fill="#5a5a5a" stroke="#d2d2d2" stroke-width="1.100"/><path d="M0-3.500l3.500 3.500" stroke="#d2d2d2" stroke-width="2.400"/><path d="M2.500-5.500c1.500-3 5-3 5.500-.5s-1.500 3.500-3.500 3.500z" fill="#d2d2d2"/><path d="M13.500 6.500v3.500H10z" fill="#d8d8d8"/></g><g transform="translate(49,357)"><rect x="-9" y="-8" width="9" height="9" fill="#9a9a9a" stroke="#d2d2d2"/><rect x="-6" y="-5.500" width="9" height="9" fill="#868686" stroke="#d2d2d2"/><rect x="-3" y="-3" width="9" height="9" fill="#777" stroke="#d2d2d2"/><circle cx="5" cy="4" r="4.500" fill="#5a5a5a" stroke="#d2d2d2" stroke-width="2.200"/></g><g transform="translate(18.5,383)"><rect x="-3.500" y="-3" width="10" height="11" fill="#555" stroke="#d2d2d2" stroke-width="1.200"/><rect x="-1" y="-6.500" width="4" height="3" fill="#d2d2d2"/><circle cx="1.500" cy="3" r="2.800" fill="none" stroke="#d2d2d2" stroke-width="1.500"/><g fill="#d2d2d2"><rect x="-10" y="-8" width="1.500" height="1.500"/><rect x="-7" y="-8" width="1.500" height="1.500"/><rect x="-8.500" y="-6" width="1.500" height="1.500"/><rect x="-5.500" y="-6" width="1.500" height="1.500"/><rect x="-10" y="-4" width="1.500" height="1.500"/><rect x="-7" y="-4" width="1.500" height="1.500"/><rect x="-4" y="-8" width="1.500" height="1.500"/></g><path d="M13.500 6.500v3.500H10z" fill="#d8d8d8"/></g><g transform="translate(49,383)"><path d="M-8-7.500v14h16" fill="none" stroke="#d2d2d2" stroke-width="1.200"/><rect x="-5.500" y="-.5" width="3" height="6" fill="#777" stroke="#d2d2d2"/><rect x="-.5" y="-3.500" width="3" height="9" fill="#777" stroke="#d2d2d2"/><rect x="4.500" y="-2" width="3" height="7.500" fill="#777" stroke="#d2d2d2"/><path d="M13.500 6.500v3.500H10z" fill="#d8d8d8"/></g><g transform="translate(18.5,408.5)"><rect x="-6" y="-5" width="11" height="9" fill="#777"/><path d="M-6-10v18M5-10v18M-11-5h21M-11 4h21" stroke="#d2d2d2" stroke-width="1.100"/></g><g transform="translate(49,408.5)"><path d="M8.500-8.500L-7.500 4.500l6-1.500z" fill="#d2d2d2"/><path d="M8.500-8.500L1.500 1l-3 2 1-3.500z" fill="#8a8a8a"/><path d="M-1.500-6l8-2.500" stroke="#d2d2d2" stroke-width="1.200"/><path d="M13.500 4.500v3.500H10z" fill="#d8d8d8"/></g><g transform="translate(18.5,433)"><path d="M-5.500 8l-4-6c-1-1.500 .5-2.500 1.800-1.200l1.700 1.700v-7c0-1.500 2-1.500 2.200 0l.3 4v-6c0-1.600 2.200-1.600 2.300 0l.2 6 .5-5c.2-1.500 2.200-1.300 2.200 .2l-.2 5.300 1-3c.5-1.300 2.200-.8 2 .5l-1 5.500c-.5 2.500-1 3.500-2 5z" fill="#d2d2d2"/><path d="M13.500 6.500v3.500H10z" fill="#d8d8d8"/></g><g transform="translate(49,433)"><circle cx="-2" cy="-2.500" r="5.500" fill="#7a7a7a" stroke="#d2d2d2" stroke-width="1.500"/><circle cx="-2" cy="-2.500" r="3" fill="none" stroke="#999" stroke-dasharray="1 1"/><path d="M2 2l6 6" stroke="#d2d2d2" stroke-width="3" stroke-linecap="round"/></g></svg>
<div class="a" style="left:23px;top:468px;width:35px;height:35px;background:#000;border:1px solid #1a1a1a"></div>
<div class="a" style="left:31px;top:476px;width:19px;height:19px;background:#4a4a4a;border:1px solid #f4f4f4"></div>
<div class="a" style="left:4px;top:449px;width:36px;height:36px;background:#fff;border:1px solid #d0d0d0;box-shadow:1px 1px 0 #333"></div>
<svg style="left:47px;top:448px" width="14" height="14"><path d="M3 3.500h6.500v6.500" fill="none" stroke="#dcdcdc" stroke-width="1.300"/><path d="M4.500 .5v6L1 3.500zM6.500 8.500h6L9.500 12z" fill="#dcdcdc"/></svg>
<svg style="left:4px;top:490px" width="14" height="14"><rect x="4.500" y="4.500" width="8" height="8" fill="#111" stroke="#ddd"/><rect x="5.500" y="5.500" width="6" height="6" fill="none" stroke="#111" stroke-width="2"/><rect x=".5" y=".5" width="8" height="8" fill="#fff" stroke="#222"/></svg>
<div class="a" style="left:6px;top:510px;width:57px;height:19px;background:#2e2e2e;border-radius:1px"></div>
<div class="a" style="left:6px;top:510px;width:19px;height:19px;background:#262626"></div>
<div class="a" style="left:9px;top:513px;width:13px;height:13px;background:#fff;border:1px solid #222"></div>
<div class="a" style="left:28px;top:513px;width:13px;height:13px;background:linear-gradient(90deg,#fff,#222);border:1px solid #ddd"></div>
<svg style="left:46px;top:513px" width="13" height="13"><rect x=".5" y=".5" width="12" height="12" fill="#fff" stroke="#ddd"/><path d="M1 12L12 1" stroke="#e03a1e" stroke-width="3"/></svg>
<div class="a" style="left:5px;top:536px;width:58px;height:16px;background:#666;border:1px solid #3a3a3a"></div>
<div class="a" style="left:5px;top:536px;width:20px;height:16px;background:#353535;border:1px solid #2a2a2a"></div>
<svg style="left:5px;top:536px" width="58" height="16"><circle cx="9" cy="7" r="3.500" fill="#999" stroke="#ddd"/><rect x="9.500" y="7.500" width="6" height="6" fill="#bbb" stroke="#eee"/><circle cx="29" cy="7" r="3.500" fill="#8a8a8a" stroke="#aaa"/><rect x="27.500" y="6.500" width="6" height="6" fill="none" stroke="#999"/><circle cx="48" cy="8" r="3.500" fill="none" stroke="#7e7e7e"/><rect x="47.500" y="5.500" width="5" height="5" fill="none" stroke="#7e7e7e"/></svg>
<svg style="left:22px;top:560px" width="24" height="18"><rect x="6.500" y=".5" width="15" height="11" fill="#777" stroke="#dcdcdc"/><rect x=".5" y="4.500" width="15" height="11" fill="#4a4a4a" stroke="#dcdcdc"/><rect x="6.500" y="4.500" width="9" height="7" fill="#8a8a8a" stroke="#dcdcdc"/></svg>
<!-- ===== left floating panel: Pathfinder / Ausrichten / Transformieren ===== -->
<div class="a" style="left:106px;top:297px;width:242px;height:638px;background:#4a4a4a;border:1px solid #2a2a2a;border-radius:4px 4px 0 0;box-shadow:0 0 0 1px rgba(255,255,255,.10),0 2px 3px rgba(0,0,0,.25)"></div>
<div class="a" style="left:107px;top:298px;width:240px;height:13px;background:linear-gradient(#2a2a2a,#333);border-radius:3px 3px 0 0"></div>
<svg style="left:112px;top:301px" width="7" height="7"><path d="M.8 .8l5.400 5.400M6.200 .8L.8 6.200" stroke="#e2e2e2" stroke-width="1.300"/></svg>
<svg style="left:334px;top:301px" width="9" height="7"><path d="M4 .5v6L.5 3.500zM8.500 .5v6L5 3.500z" fill="#cfcfcf"/></svg>
<div class="a" style="left:107px;top:311px;width:240px;height:17px;background:#323232;border-top:1px solid #262626"></div>
<div class="a" style="left:107px;top:311px;width:66px;height:17px;background:#4a4a4a;border-top:1px solid #5a5a5a;border-right:1px solid #2a2a2a"></div>
<div class="lbl" style="left:114px;top:314px;font-size:10.800px;letter-spacing:.1px;color:#f0f0f0">Pathfinder</div>
<svg style="left:329px;top:316px" width="15" height="9"><path d="M0 1.500h4.500L2.200 4z" fill="#dcdcdc"/><path d="M5.500 1.500h9M5.500 3.500h9M5.500 5.500h9M5.500 7.500h9" stroke="#d8d8d8" stroke-width="1" shape-rendering="crispEdges"/></svg>
<div class="lbl" style="left:112px;top:335px">Formmodi:</div>
<svg style="left:0;top:0" width="360" height="940"><g transform="translate(124.5,364.5)"><rect x="-6.500" y="-6.500" width="9" height="9" fill="#9a9a9a" stroke="#d6d6d6"/><rect x="-2.500" y="-2.500" width="9" height="9" fill="#9a9a9a" stroke="#d6d6d6"/><rect x="-2" y="-2" width="4" height="4" fill="#9a9a9a"/></g><g transform="translate(159.5,364.5)"><path d="M-6.500-6.500h9v4h-5v5h-4z" fill="#777" stroke="#d6d6d6"/><rect x="-2.500" y="-2.500" width="9" height="9" fill="none" stroke="#6a6a6a"/></g><g transform="translate(197.5,364.5)"><rect x="-6.500" y="-6.500" width="9" height="9" fill="none" stroke="#d6d6d6"/><rect x="-2.500" y="-2.500" width="9" height="9" fill="none" stroke="#d6d6d6"/><rect x="-2" y="-2" width="4" height="4" fill="#9a9a9a"/></g><g transform="translate(234.5,364.5)"><rect x="-6.500" y="-6.500" width="9" height="9" fill="#8a8a8a" stroke="#d6d6d6"/><rect x="-2.500" y="-2.500" width="9" height="9" fill="#8a8a8a" stroke="#d6d6d6"/><rect x="-2" y="-2" width="4" height="4" fill="#4a4a4a" stroke="#d6d6d6" stroke-width=".8"/></g><g transform="translate(128.5,414.5)"><rect x="-7.500" y="-7.500" width="6" height="6" fill="none" stroke="#d6d6d6"/><rect x="-3.500" y="-3.500" width="6" height="6" fill="#4a4a4a" stroke="#d6d6d6"/><rect x=".5" y=".5" width="6" height="6" fill="#4a4a4a" stroke="#d6d6d6"/></g><g transform="translate(167.5,414.5)"><rect x="-7" y="-7" width="5" height="5" fill="#bdbdbd"/><rect x="-1.500" y="-7" width="3.500" height="5" fill="#bdbdbd"/><rect x="-7" y="-1.500" width="5" height="3.500" fill="#bdbdbd"/><rect x="-1" y="-1" width="8" height="8" fill="#a8a8a8"/></g><g transform="translate(207,414.5)"><rect x="-7" y="-7" width="9" height="9" fill="#cdcdcd"/><path d="M2.500-1.500h4.500v8.500h-8.500v-4.500h4z" fill="#9e9e9e"/></g><g transform="translate(246.5,414.5)"><rect x="-6.500" y="-6.500" width="9" height="9" fill="none" stroke="#6b6b6b"/><rect x="-2.500" y="-2.500" width="9" height="9" fill="none" stroke="#6b6b6b"/><rect x="-2.500" y="-2.500" width="5" height="5" fill="#b4b4b4"/></g><g transform="translate(285.5,414.5)"><rect x="-7.500" y="-7.500" width="8" height="8" fill="none" stroke="#d6d6d6"/><rect x="-.5" y="-.5" width="8" height="8" fill="none" stroke="#d6d6d6"/><rect x="-2.500" y="-2.500" width="4" height="4" fill="#4a4a4a" stroke="#d6d6d6"/></g><g transform="translate(323.5,414.5)"><rect x="-7.500" y="-7.500" width="9" height="9" fill="none" stroke="#7a7a7a"/><path d="M1.500-1.500h5v8h-8v-5" fill="none" stroke="#d6d6d6" stroke-width="1"/><path d="M-1.500 1.500h3v-3" fill="none" stroke="#d6d6d6" stroke-width="2"/></g><g transform="translate(124.5,489.5)"><path d="M-6-7v14" stroke="#d6d6d6"/><rect x="-4" y="-5" width="6" height="4" fill="#bdbdbd"/><rect x="-4.500" y="1.500" width="11" height="4" fill="none" stroke="#d6d6d6"/></g><g transform="translate(160.5,489.5)"><path d="M0-8v16" stroke="#d6d6d6"/><rect x="-3" y="-5" width="6" height="4" fill="#bdbdbd"/><rect x="-5.500" y="1.500" width="11" height="4" fill="#4a4a4a" stroke="#d6d6d6"/></g><g transform="translate(197.5,489.5)"><path d="M6-7v14" stroke="#d6d6d6"/><rect x="-2" y="-5" width="6" height="4" fill="#bdbdbd"/><rect x="-6.500" y="1.500" width="11" height="4" fill="none" stroke="#d6d6d6"/></g><g transform="translate(256.5,489.5)"><path d="M-7-7h14" stroke="#d6d6d6"/><rect x="-5.500" y="-4.500" width="4" height="10" fill="none" stroke="#d6d6d6"/><rect x="1" y="-5" width="4" height="6" fill="#bdbdbd"/></g><g transform="translate(293.5,489.5)"><path d="M-8-1h16" stroke="#d6d6d6"/><rect x="-5.500" y="-6.500" width="4" height="10" fill="#4a4a4a" stroke="#d6d6d6"/><rect x="1" y="-4" width="5" height="6" fill="#bdbdbd"/></g><g transform="translate(328.5,489.5)"><path d="M-7 7h14" stroke="#d6d6d6"/><rect x="-5.500" y="-5.500" width="4" height="10" fill="none" stroke="#d6d6d6"/><rect x="1" y="-1" width="4" height="6" fill="#bdbdbd"/></g><g transform="translate(124.5,545.5)"><path d="M-8-6h16M-8 2h16" stroke="#d6d6d6"/><rect x="-3" y="-5.500" width="6" height="4" fill="#bdbdbd"/><rect x="-5.500" y="2.500" width="11" height="4" fill="none" stroke="#d6d6d6"/></g><g transform="translate(161.5,545.5)"><path d="M-8-3.500h16M-8 3.500h16" stroke="#d6d6d6"/><rect x="-3" y="-5.500" width="6" height="4" fill="#bdbdbd"/><rect x="-5.500" y="1.500" width="11" height="4" fill="#4a4a4a" stroke="#d6d6d6"/></g><g transform="translate(196.5,545.5)"><path d="M-8-1h16M-8 6.500h16" stroke="#d6d6d6"/><rect x="-3" y="-5" width="6" height="4" fill="#bdbdbd"/><rect x="-5.500" y="2.500" width="11" height="4" fill="none" stroke="#d6d6d6"/></g><g transform="translate(257.5,545.5)"><path d="M-6-8v16M2-8v16" stroke="#d6d6d6"/><rect x="-5.500" y="-5.500" width="4" height="11" fill="none" stroke="#d6d6d6"/><rect x="2.500" y="-3" width="4" height="6" fill="#bdbdbd"/></g><g transform="translate(294.5,545.5)"><path d="M-3.500-8v16M3.500-8v16" stroke="#d6d6d6"/><rect x="-5.500" y="-5.500" width="4" height="11" fill="#4a4a4a" stroke="#d6d6d6"/><rect x="1.500" y="-3" width="4" height="6" fill="#bdbdbd"/></g><g transform="translate(328.5,545.5)"><path d="M-1-8v16M6.500-8v16" stroke="#d6d6d6"/><rect x="-5" y="-3" width="4" height="6" fill="#bdbdbd"/><rect x="2.500" y="-5.500" width="4" height="11" fill="none" stroke="#d6d6d6"/></g><g transform="translate(125.5,601.5)"><path d="M-9-2.500h5M-9 1.500h5" stroke="#d6d6d6"/><rect x="-3" y="-6" width="7" height="4" fill="#bdbdbd"/><rect x="-4.500" y="1.500" width="11" height="4" fill="none" stroke="#d6d6d6"/></g><g transform="translate(156.5,601.5)"><path d="M-2.500-9v5M1.500-9v5" stroke="#d6d6d6"/><rect x="-6.500" y="-3.500" width="4" height="10" fill="none" stroke="#d6d6d6"/><rect x="1" y="-2" width="5" height="6" fill="#bdbdbd"/></g><g transform="translate(285.5,601.5)"><rect x="-5.500" y="-5.500" width="10" height="10" fill="none" stroke="#d6d6d6" stroke-dasharray="1 1"/><rect x="-3.500" y="-3.500" width="6" height="6" fill="none" stroke="#d6d6d6"/><rect x="-1.500" y="-1.500" width="2" height="2" fill="#d6d6d6"/><path d="M8-1.500h7l-3.500 4z" fill="#d6d6d6"/></g><rect x="112.5" y="660.0" width="4" height="4" fill="none" stroke="#d6d6d6"/><rect x="112.5" y="667.5" width="4" height="4" fill="none" stroke="#d6d6d6"/><rect x="112.5" y="675.0" width="4" height="4" fill="none" stroke="#d6d6d6"/><rect x="120.0" y="660.0" width="4" height="4" fill="none" stroke="#d6d6d6"/><rect x="120.0" y="667.5" width="4" height="4" fill="#d0d0d0" stroke="#d6d6d6"/><rect x="120.0" y="675.0" width="4" height="4" fill="none" stroke="#d6d6d6"/><rect x="127.5" y="660.0" width="4" height="4" fill="none" stroke="#d6d6d6"/><rect x="127.5" y="667.5" width="4" height="4" fill="none" stroke="#d6d6d6"/><rect x="127.5" y="675.0" width="4" height="4" fill="none" stroke="#d6d6d6"/><path d="M117 662h3M124.500 662h3M117 669.500h3M124.500 669.500h3M117 677h3M124.500 677h3M114.500 664.500v3M114.500 672v3M122 664.500v3M122 672v3M129.500 664.500v3M129.500 672v3" stroke="#d6d6d6" stroke-width="1"/><path d="M140 712.500h11M141.500 712L148 704.500" fill="none" stroke="#7e7e7e" stroke-width="1.100"/><path d="M226 712.500h6l4.500-8h-6z" fill="none" stroke="#7e7e7e" stroke-width="1.100"/></svg>
<div class="btn" style="left:260px;top:356px;width:81px;height:17px;background:#505050;border-color:#3a3a3a;box-shadow:0 0 0 1px #555;color:#7d7d7d;text-align:center;line-height:15px;font-size:10.500px">Umwandeln</div>
<div class="lbl" style="left:112px;top:385px">Pathfinder:</div>
<div class="a" style="left:107px;top:434px;width:240px;height:17px;background:#323232;border-top:1px solid #262626"></div>
<div class="a" style="left:107px;top:434px;width:76px;height:17px;background:#4a4a4a;border-top:1px solid #5a5a5a;border-right:1px solid #2a2a2a"></div>
<svg style="left:111px;top:438px" width="7" height="10"><path d="M1 3.500L3.500 1 6 3.500M1 6.500L3.500 9 6 6.500" fill="none" stroke="#d8d8d8" stroke-width="1.100"/></svg>
<div class="lbl" style="left:120px;top:437px;font-size:10.800px;letter-spacing:.1px;color:#f0f0f0">Ausrichten</div>
<svg style="left:329px;top:439px" width="15" height="9"><path d="M0 1.500h4.500L2.200 4z" fill="#dcdcdc"/><path d="M5.500 1.500h9M5.500 3.500h9M5.500 5.500h9M5.500 7.500h9" stroke="#d8d8d8" stroke-width="1" shape-rendering="crispEdges"/></svg>
<div class="lbl" style="left:112px;top:459px">Objekte ausrichten:</div>
<div class="sep" style="left:112px;top:507px;width:232px;height:1px"></div>
<div class="lbl" style="left:112px;top:515px">Objekte verteilen:</div>
<div class="sep" style="left:112px;top:563px;width:232px;height:1px"></div>
<div class="lbl" style="left:112px;top:571px">Abstand verteilen:</div>
<div class="lbl" style="left:271px;top:572px">Ausrichten an:</div>
<div class="vsep" style="left:264px;top:568px;height:48px"></div>
<div class="inpd" style="left:176px;top:592px;width:82px;height:17px;padding-left:21px">0 mm</div>
<div class="a" style="left:177px;top:593px;width:16px;height:15px;background:#757575;border-right:1px solid #4a4a4a"></div>
<svg style="left:177px;top:593px" width="16" height="15"><path d="M0 7.500h16" stroke="#5a5a5a"/><path d="M5 5.500h6L8 2.500zM5 9.500h6L8 12.500z" fill="#8c8c8c"/></svg>
<div class="a" style="left:107px;top:622px;width:240px;height:17px;background:#323232;border-top:1px solid #262626"></div>
<div class="a" style="left:107px;top:622px;width:99px;height:17px;background:#4a4a4a;border-top:1px solid #5a5a5a;border-right:1px solid #2a2a2a"></div>
<svg style="left:111px;top:626px" width="7" height="10"><path d="M1 3.500L3.500 1 6 3.500M1 6.500L3.500 9 6 6.500" fill="none" stroke="#d8d8d8" stroke-width="1.100"/></svg>
<div class="lbl" style="left:120px;top:625px;font-size:10.800px;letter-spacing:.1px;color:#f0f0f0">Transformieren</div>
<svg style="left:329px;top:627px" width="15" height="9"><path d="M0 1.500h4.500L2.200 4z" fill="#dcdcdc"/><path d="M5.500 1.500h9M5.500 3.500h9M5.500 5.500h9M5.500 7.500h9" stroke="#d8d8d8" stroke-width="1" shape-rendering="crispEdges"/></svg>
<div class="lbl dim" style="left:145px;top:651px;color:#8a8a8a">X:</div>
<div class="lbl dim" style="left:232px;top:651px;color:#8a8a8a">B:</div>
<div class="lbl dim" style="left:146px;top:677px;color:#8a8a8a">Y:</div>
<div class="lbl dim" style="left:230px;top:677px;color:#8a8a8a">H:</div>
<div class="inpd" style="left:159px;top:647px;width:65px;height:18px">0 mm</div>
<div class="inpd" style="left:245px;top:647px;width:65px;height:18px">0 mm</div>
<div class="inpd" style="left:159px;top:672px;width:65px;height:18px">0 mm</div>
<div class="inpd" style="left:245px;top:672px;width:65px;height:18px">0 mm</div>
<div class="inpd" style="left:159px;top:698px;width:60px;height:18px">0°</div>
<div class="a" style="left:203px;top:699px;width:15px;height:16px;background:#5e5e5e;border-left:1px solid #3a3a3a"></div>
<svg style="left:203px;top:699px" width="15" height="16"><path d="M4.500 6.500h7L8 10.500z" fill="#8c8c8c"/></svg>
<div class="inpd" style="left:245px;top:698px;width:60px;height:18px">0°</div>
<div class="a" style="left:289px;top:699px;width:15px;height:16px;background:#5e5e5e;border-left:1px solid #3a3a3a"></div>
<svg style="left:289px;top:699px" width="15" height="16"><path d="M4.500 6.500h7L8 10.500z" fill="#8c8c8c"/></svg>
<div class="a" style="left:315px;top:656px;width:24px;height:24px;background:#2c2c2c;border:1px solid #3c3c3c"></div>
<svg style="left:315px;top:656px" width="24" height="24"><rect x="9" y="4.500" width="6" height="8" rx="3" fill="none" stroke="#e6e6e6" stroke-width="1.800"/><rect x="9" y="11.500" width="6" height="8" rx="3" fill="none" stroke="#e6e6e6" stroke-width="1.800"/><path d="M12 9v6" stroke="#e6e6e6" stroke-width="1.600"/></svg>
<div class="sep" style="left:112px;top:724px;width:232px;height:1px;background:#404040;box-shadow:0 1px 0 #525252"></div>
<div class="t dim" style="left:165px;top:790px;font-size:11px;color:#8a8a8a;letter-spacing:-.12px">Keine Formeigenschaften</div>
<div class="sep" style="left:112px;top:867px;width:232px;height:1px;background:#404040;box-shadow:0 1px 0 #525252"></div>
<div class="a" style="left:113px;top:875px;width:12px;height:12px;background:#555;border:1px solid #444"></div>
<div class="t dim" style="left:129px;top:875px;font-size:11px;color:#858585;letter-spacing:-0.12px">Rechteck-Ecken skalieren</div>
<div class="a" style="left:113px;top:895px;width:12px;height:12px;background:#555;border:1px solid #444"></div>
<div class="t dim" style="left:129px;top:895px;font-size:11px;color:#858585;letter-spacing:-0.03px">Konturen und Effekte skalieren</div>
<div class="a" style="left:113px;top:915px;width:12px;height:12px;background:#555;border:1px solid #444"></div>
<div class="t dim" style="left:129px;top:915px;font-size:11px;color:#858585;letter-spacing:-0.03px">An Pixelraster ausrichten</div>
<svg style="left:113px;top:872px" width="14" height="14"><path d="M2.500 8l3 3.500L11.500 2" fill="none" stroke="#9a9a9a" stroke-width="2"/></svg>
<!-- ===== right floating panel: Kontur ===== -->
<div class="a" style="left:1601px;top:465px;width:242px;height:348px;background:#4a4a4a;border:1px solid #2a2a2a;border-radius:4px 4px 0 0;box-shadow:0 0 0 1px rgba(255,255,255,.10),0 2px 3px rgba(0,0,0,.25)"></div>
<div class="a" style="left:1602px;top:466px;width:240px;height:13px;background:linear-gradient(#2a2a2a,#333);border-radius:3px 3px 0 0"></div>
<svg style="left:1606px;top:469px" width="7" height="7"><path d="M.8 .8l5.400 5.400M6.200 .8L.8 6.200" stroke="#e2e2e2" stroke-width="1.300"/></svg>
<svg style="left:1829px;top:469px" width="9" height="7"><path d="M4 .5v6L.5 3.500zM8.500 .5v6L5 3.500z" fill="#cfcfcf"/></svg>
<div class="a" style="left:1602px;top:479px;width:240px;height:17px;background:#323232;border-top:1px solid #262626"></div>
<div class="a" style="left:1602px;top:479px;width:54px;height:17px;background:#4a4a4a;border-top:1px solid #5a5a5a;border-right:1px solid #2a2a2a"></div>
<svg style="left:1606px;top:483px" width="7" height="10"><path d="M1 3.500L3.500 1 6 3.500M1 6.500L3.500 9 6 6.500" fill="none" stroke="#d8d8d8" stroke-width="1.100"/></svg>
<div class="lbl" style="left:1615px;top:482px;font-size:10.800px;letter-spacing:.1px;color:#f0f0f0">Kontur</div>
<svg style="left:1824px;top:484px" width="15" height="9"><path d="M0 1.500h4.500L2.200 4z" fill="#dcdcdc"/><path d="M5.500 1.500h9M5.500 3.500h9M5.500 5.500h9M5.500 7.500h9" stroke="#d8d8d8" stroke-width="1" shape-rendering="crispEdges"/></svg>
<div class="lbl" style="left:1560px;width:107px;text-align:right;top:507px">Stärke:</div>
<div class="btn" style="left:1672px;top:504px;width:17px;height:18px"></div>
<svg style="left:1672px;top:504px" width="17" height="18"><path d="M5 7.500h7L8.500 3.500zM5 10.500h7l-3.500 4z" fill="#dedede"/><path d="M1 9h15" stroke="#3a3a3a" stroke-width=".6"/></svg>
<div class="inp" style="left:1688px;top:504px;width:62px;height:18px;line-height:16px">1 pt</div>
<div class="dd" style="left:1749px;top:504px;width:16px;height:18px"></div>
<div class="lbl" style="left:1560px;width:107px;text-align:right;top:533px">Abschluss:</div>
<div class="a" style="left:1672px;top:529px;width:24px;height:19px;background:linear-gradient(#636363,#555);border:1px solid #2b2b2b"></div>
<div class="a" style="left:1695px;top:529px;width:24px;height:19px;background:#2e2e2e;border:1px solid #2b2b2b"></div>
<div class="a" style="left:1718px;top:529px;width:24px;height:19px;background:linear-gradient(#636363,#555);border:1px solid #2b2b2b"></div>
<svg style="left:1672px;top:529px" width="70" height="19"><path d="M12 5h8v10h-8z" fill="#d8d8d8"/><path d="M8 10h8" stroke="#222" stroke-width="1.500"/><rect x="7" y="8.500" width="3" height="3" fill="#222"/><path d="M38 5h5v10h-5a5 5 0 0 1 0-10z" fill="#d8d8d8"/><path d="M36 10h7" stroke="#222" stroke-width="1.500"/><rect x="35" y="8.500" width="3" height="3" fill="#222"/><path d="M54 5h12v10h-12z" fill="#d8d8d8"/><path d="M59 10h7" stroke="#222" stroke-width="1.500"/><rect x="58" y="8.500" width="3" height="3" fill="#222"/></svg>
<div class="lbl" style="left:1560px;width:107px;text-align:right;top:560px">Ecke:</div>
<div class="a" style="left:1672px;top:557px;width:24px;height:19px;background:#2e2e2e;border:1px solid #2b2b2b"></div>
<div class="a" style="left:1695px;top:557px;width:24px;height:19px;background:linear-gradient(#636363,#555);border:1px solid #2b2b2b"></div>
<div class="a" style="left:1718px;top:557px;width:24px;height:19px;background:linear-gradient(#636363,#555);border:1px solid #2b2b2b"></div>
<svg style="left:1672px;top:557px" width="70" height="19"><path d="M6 4h13v5h-7v7h-6z" fill="#d8d8d8"/><path d="M10 15v-7h8" fill="none" stroke="#222" stroke-width="1.300"/><rect x="8.500" y="6.500" width="3" height="3" fill="#222"/><path d="M35 4h7v5h-7v7h-6v-6a6 6 0 0 1 6-6z" fill="#d8d8d8"/><path d="M33 15v-7h8" fill="none" stroke="#222" stroke-width="1.300"/><rect x="31.500" y="6.500" width="3" height="3" fill="#222"/><path d="M57 4h8v5h-7v7h-6v-7z" fill="#d8d8d8"/><path d="M56 15v-7h8" fill="none" stroke="#222" stroke-width="1.300"/><rect x="54.500" y="6.500" width="3" height="3" fill="#222"/></svg>
<div class="lbl" style="left:1753px;top:560px">Max.:</div>
<div class="inp" style="left:1784px;top:557px;width:42px;height:18px;line-height:16px">10</div>
<div class="lbl" style="left:1830px;top:560px">x</div>
<div class="lbl" style="left:1560px;width:107px;text-align:right;top:587px">Kont. ausr.:</div>
<div class="a" style="left:1672px;top:584px;width:24px;height:19px;background:#2e2e2e;border:1px solid #2b2b2b"></div>
<div class="a" style="left:1695px;top:584px;width:24px;height:19px;background:#5c5c5c;border:1px solid #3a3a3a"></div>
<div class="a" style="left:1718px;top:584px;width:24px;height:19px;background:#5c5c5c;border:1px solid #3a3a3a"></div>
<svg style="left:1672px;top:584px" width="70" height="19"><path d="M8 4v10h11" fill="none" stroke="#e8e8e8" stroke-width="1.300"/><path d="M12 4v7h7" fill="none" stroke="#e8e8e8" stroke-width="2.200"/><path d="M31 4v10h11" fill="none" stroke="#7e7e7e" stroke-width="2.500"/><path d="M31 4v10h11" fill="none" stroke="#6a6a6a" stroke-width="1"/><path d="M54 4v10h11" fill="none" stroke="#7a7a7a" stroke-width="1.200"/><path d="M57.500 4v7h7" fill="none" stroke="#767676" stroke-width="2"/></svg>
<div class="sep" style="left:1607px;top:610px;width:232px;height:1px"></div>
<div class="a" style="left:1608px;top:621px;width:12px;height:12px;background:#606060;border:1px solid #3a3a3a;box-shadow:inset 0 1px 1px rgba(0,0,0,.25)"></div>
<div class="lbl" style="left:1624px;top:621px">Gestrichelte Linie</div>
<div class="a" style="left:1758px;top:617px;width:39px;height:19px;background:#525252;border:1px solid #3e3e3e"></div>
<div class="a" style="left:1796px;top:617px;width:39px;height:19px;background:#525252;border:1px solid #3e3e3e"></div>
<svg style="left:1758px;top:617px" width="78" height="19"><rect x="5.500" y="4.500" width="27" height="10" fill="none" stroke="#7c7c7c" stroke-dasharray="8 4"/><rect x="44.500" y="4.500" width="27" height="10" fill="none" stroke="#7c7c7c" stroke-dasharray="5 3" stroke-dashoffset="2"/></svg>
<div class="a" style="left:1608.0px;top:645px;width:34px;height:17px;background:#6a6a6a;border:1px solid #3e3e3e"></div>
<div class="lbl dim" style="left:1608.0px;top:665px;width:34px;text-align:center;font-weight:normal;font-size:10.500px;color:#888">Strich</div>
<div class="a" style="left:1645.5px;top:645px;width:34px;height:17px;background:#6a6a6a;border:1px solid #3e3e3e"></div>
<div class="lbl dim" style="left:1645.5px;top:665px;width:34px;text-align:center;font-weight:normal;font-size:10.500px;color:#888">Lücke</div>
<div class="a" style="left:1683.0px;top:645px;width:34px;height:17px;background:#6a6a6a;border:1px solid #3e3e3e"></div>
<div class="lbl dim" style="left:1683.0px;top:665px;width:34px;text-align:center;font-weight:normal;font-size:10.500px;color:#888">Strich</div>
<div class="a" style="left:1720.5px;top:645px;width:34px;height:17px;background:#6a6a6a;border:1px solid #3e3e3e"></div>
<div class="lbl dim" style="left:1720.5px;top:665px;width:34px;text-align:center;font-weight:normal;font-size:10.500px;color:#888">Lücke</div>
<div class="a" style="left:1758.0px;top:645px;width:34px;height:17px;background:#6a6a6a;border:1px solid #3e3e3e"></div>
<div class="lbl dim" style="left:1758.0px;top:665px;width:34px;text-align:center;font-weight:normal;font-size:10.500px;color:#888">Strich</div>
<div class="a" style="left:1795.5px;top:645px;width:34px;height:17px;background:#6a6a6a;border:1px solid #3e3e3e"></div>
<div class="lbl dim" style="left:1795.5px;top:665px;width:34px;text-align:center;font-weight:normal;font-size:10.500px;color:#888">Lücke</div>
<div class="sep" style="left:1607px;top:682px;width:232px;height:1px"></div>
<div class="lbl" style="left:1560px;width:107px;text-align:right;top:695px">Pfeilspitzen:</div>
<div class="lt" style="left:1672px;top:692px;width:44px;height:18px"></div>
<div class="a" style="left:1678px;top:700px;width:31px;height:2px;background:#111"></div>
<div class="dd" style="left:1715px;top:692px;width:16px;height:18px"></div>
<div class="lt" style="left:1743px;top:692px;width:44px;height:18px"></div>
<div class="a" style="left:1749px;top:700px;width:31px;height:2px;background:#111"></div>
<div class="dd" style="left:1786px;top:692px;width:16px;height:18px"></div>
<svg style="left:1817px;top:694px" width="15" height="14"><path d="M2 4h9M13 10H4" stroke="#8a8a8a" stroke-width="1.400"/><path d="M9.500 1l3.500 3-3.500 3zM5.500 7L2 10l3.500 3z" fill="#8a8a8a"/></svg>
<div class="lbl dim" style="left:1560px;width:107px;text-align:right;top:725px">Skalieren:</div>
<div class="inpd" style="left:1672px;top:722px;width:59px;height:18px;padding-left:21px;line-height:16px">100%</div>
<div class="a" style="left:1673px;top:723px;width:16px;height:16px;background:#757575;border-right:1px solid #4a4a4a"></div>
<svg style="left:1673px;top:723px" width="16" height="16"><path d="M0 8h16" stroke="#5a5a5a"/><path d="M5 6h6L8 3zM5 10h6l-3 3z" fill="#8c8c8c"/></svg>
<div class="inpd" style="left:1743px;top:722px;width:59px;height:18px;padding-left:21px;line-height:16px">100%</div>
<div class="a" style="left:1744px;top:723px;width:16px;height:16px;background:#757575;border-right:1px solid #4a4a4a"></div>
<svg style="left:1744px;top:723px" width="16" height="16"><path d="M0 8h16" stroke="#5a5a5a"/><path d="M5 6h6L8 3zM5 10h6l-3 3z" fill="#8c8c8c"/></svg>
<svg style="left:1817px;top:723px" width="15" height="16"><rect x="4.500" y="2.500" width="6" height="11" rx="3" fill="none" stroke="#868686" stroke-width="1.300"/><path d="M1 5h2M1 8h2M1 11h2M12 5h2M12 8h2M12 11h2" stroke="#868686"/></svg>
<div class="lbl dim" style="left:1560px;width:107px;text-align:right;top:754px">Ausrichten:</div>
<div class="a" style="left:1672px;top:751px;width:23px;height:18px;background:#525252;border:1px solid #3e3e3e"></div>
<div class="a" style="left:1694px;top:751px;width:23px;height:18px;background:#525252;border:1px solid #3e3e3e"></div>
<svg style="left:1672px;top:751px" width="46" height="18"><g stroke="#7c7c7c" fill="#7c7c7c"><path d="M5 10.500h9" stroke-width="1.300"/><path d="M12 7.500l4 3-4 3z" stroke="none"/><path d="M5 5.500h8" stroke-width="1"/><path d="M27 10.500h9" stroke-width="1.300"/><path d="M34 7.500l4 3-4 3z" stroke="none"/><path d="M27 5.500h12" stroke-width="1"/></g></svg>
<div class="sep" style="left:1607px;top:777px;width:232px;height:1px"></div>
<div class="lbl" style="left:1560px;width:107px;text-align:right;top:789px">Profil:</div>
<div class="lt" style="left:1672px;top:786px;width:96px;height:18px"></div>
<div class="a" style="left:1678px;top:793px;width:36px;height:3px;background:#111"></div>
<div class="t" style="left:1718px;top:789px;color:#111">Gleichm.</div>
<div class="dd" style="left:1767px;top:786px;width:16px;height:18px"></div>
<svg style="left:1793px;top:788px" width="40" height="15"><g fill="none" stroke="#686868" stroke-width="1.200"><path d="M2 3v9l5-4.500zM14 3v9l-5-4.500zM8 1v13"/><path d="M27 2h9l-4.500 5zM27 13h9l-4.500-5zM25 7.500h13"/></g></svg>
</div>
</body>
</html>
